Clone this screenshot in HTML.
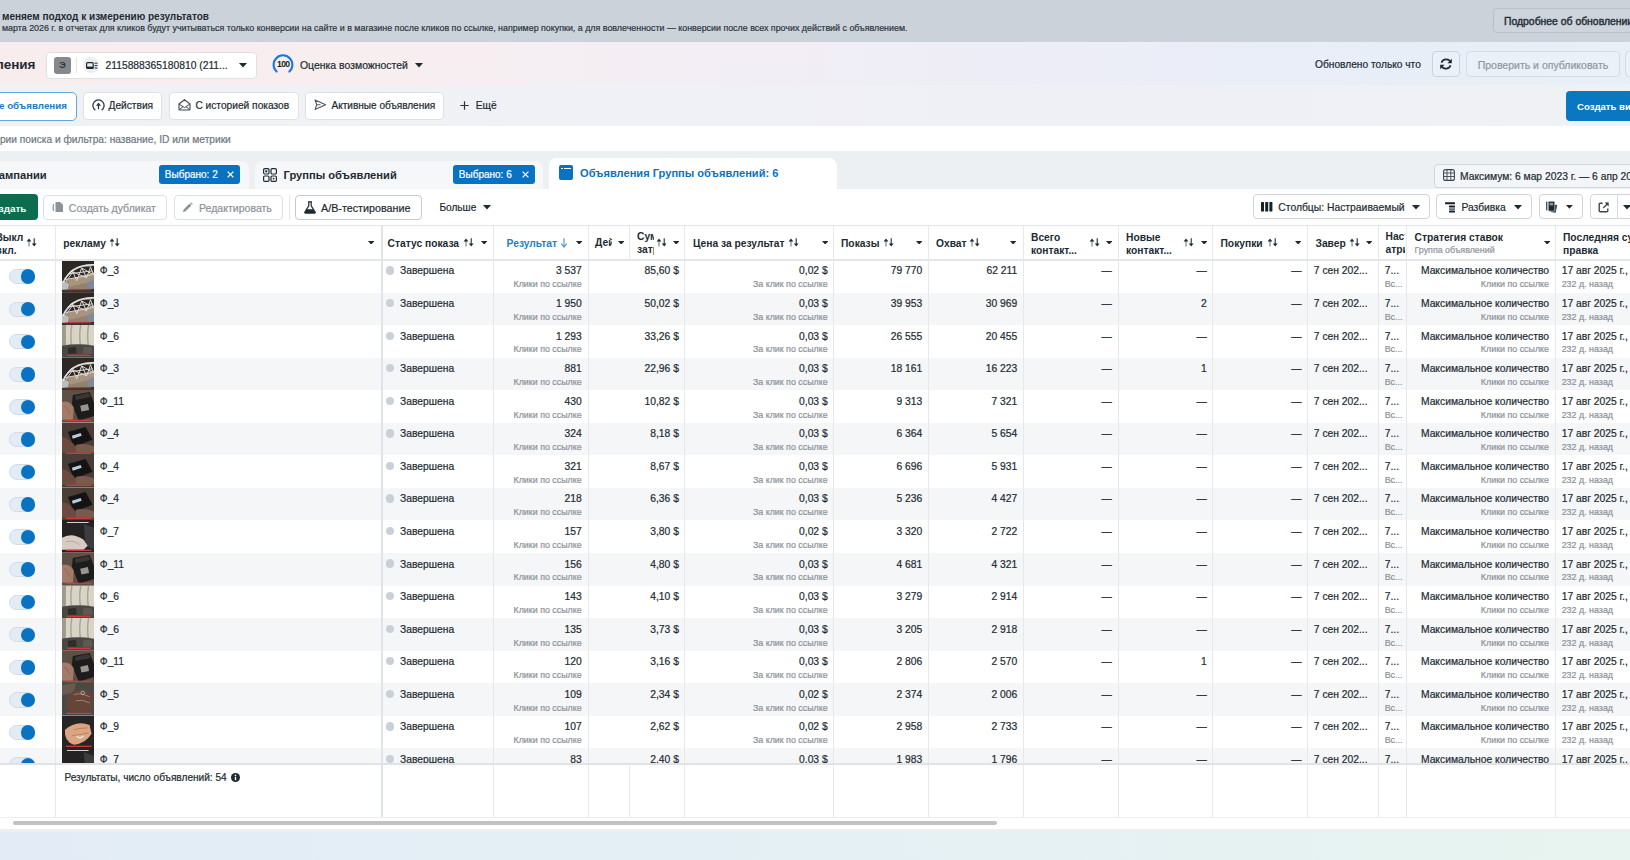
<!DOCTYPE html>
<html><head><meta charset="utf-8"><title>Ads Manager</title>
<style>
html,body{margin:0;padding:0;width:1630px;height:860px;overflow:hidden;background:#fff}
body{position:relative;font-family:"Liberation Sans",sans-serif}
.b{position:absolute;display:block}
.t{position:absolute;white-space:nowrap;font-family:"Liberation Sans",sans-serif;-webkit-text-stroke:0.2px currentColor}
.t[style*="font-weight:700"]{-webkit-text-stroke:0}
</style></head><body>
<div class="b" style="left:0.00px;top:0.00px;width:1630.00px;height:42.00px;background:#ccd2da"></div><div class="b" style="left:0.00px;top:42.00px;width:1630.00px;height:43.00px;background:linear-gradient(90deg,#f8eded 0%,#f7eef0 25%,#f2eef5 45%,#ecedf7 65%,#e8eef8 85%,#e9eff7 100%)"></div><div class="b" style="left:0.00px;top:85.00px;width:1630.00px;height:41.00px;background:linear-gradient(90deg,#eff2f5 0%,#f0f1f6 40%,#efeff6 65%,#eff2f5 100%)"></div><div class="b" style="left:0.00px;top:126.00px;width:1630.00px;height:25.00px;background:#ffffff"></div><div class="b" style="left:0.00px;top:151.00px;width:1630.00px;height:38.00px;background:#eef1f4"></div><div class="b" style="left:0.00px;top:189.00px;width:1630.00px;height:629.00px;background:#ffffff"></div><div class="b" style="left:0.00px;top:818.00px;width:1630.00px;height:11.00px;background:#ffffff"></div><div class="b" style="left:0.00px;top:829.00px;width:1630.00px;height:3.00px;background:#edf0f2"></div><div class="b" style="left:0.00px;top:832.00px;width:1630.00px;height:28.00px;background:linear-gradient(90deg,#e3ecf6 0%,#e4eff5 40%,#e6f2f2 75%,#e8f4ef 100%)"></div><div class="t" style="left:2.00px;top:11.84px;font-size:10px;line-height:10px;font-weight:700;color:#1f2a33;">меняем подход к измерению результатов</div><div class="t" style="left:2.00px;top:24.38px;font-size:8.88px;line-height:8.88px;font-weight:400;color:#2b3640;">марта 2026 г. в отчетах для кликов будут учитываться только конверсии на сайте и в магазине после кликов по ссылке, например покупки, а для вовлеченности — конверсии после всех прочих действий с объявлением.</div><div class="b" style="left:1492.50px;top:8.30px;width:187.50px;height:25.20px;background:#ced4db;border:1px solid #b9c0c8;border-radius:4px;box-sizing:border-box"></div><div class="t" style="left:1504.00px;top:16.90px;font-size:10.4px;line-height:10.4px;font-weight:400;color:#1c2b33;-webkit-text-stroke:0.45px #2a3640">Подробнее об обновлении</div><div class="t" style="left:-164.50px;width:200px;text-align:right;top:58.07px;font-size:13.5px;line-height:13.5px;font-weight:700;color:#1c2b33;">Объявления</div><div class="b" style="left:45.50px;top:51.50px;width:211.50px;height:27.00px;background:#fff;border:1px solid #dde1e6;border-radius:4px;box-sizing:border-box"></div><div class="b" style="left:54.00px;top:57.00px;width:17.00px;height:16.70px;background:#85898e;border-radius:3px"></div><div class="t" style="left:54.00px;width:17px;text-align:center;top:61.11px;font-size:9.2px;line-height:9.2px;font-weight:700;color:#30363b;">Э</div><div class="b" style="left:76.00px;top:57.00px;width:1.00px;height:16.00px;background:#e3e6ea"></div><div class="b" style="left:83.00px;top:57.00px;width:16.00px;height:16.00px;background:#eceff2;border-radius:50%"></div><svg class="b" style="left:85.50px;top:61.50px" width="12" height="8" viewBox="0 0 12 8"><rect x="0.6" y="0.6" width="6.6" height="5.8" rx="1" fill="none" stroke="#1c2b33" stroke-width="1.2"/><rect x="0.6" y="4.6" width="6.6" height="1.8" fill="#1c2b33"/><path d="M8.6 1.2 H11.4 M8.6 3.6 H11.4 M8.6 6 H11.4" stroke="#1c2b33" stroke-width="1"/></svg><div class="t" style="left:105.50px;top:60.98px;font-size:10.3px;line-height:10.3px;font-weight:400;color:#1c2b33;">2115888365180810 (211...</div><svg class="b" style="left:238.50px;top:63.25px" width="8.0" height="4.5" viewBox="0 0 8.0 4.5"><path d="M0 0 L8.0 0 L4.0 4.5 Z" fill="#1c2b33"/></svg><svg class="b" style="left:272.00px;top:54.00px" width="22" height="20" viewBox="0 0 22 20"><path d="M4.6 17.6 A9.4 9.4 0 1 1 17.4 17.6" fill="none" stroke="#1877e6" stroke-width="2.1" stroke-linecap="round"/></svg><div class="t" style="left:272.20px;width:22px;text-align:center;top:60.02px;font-size:8.6px;line-height:8.6px;font-weight:700;color:#1a1d20;letter-spacing:-0.7px">100</div><div class="t" style="left:300.00px;top:60.85px;font-size:10.45px;line-height:10.45px;font-weight:400;color:#1c2b33;">Оценка возможностей</div><svg class="b" style="left:415.00px;top:63.25px" width="8.0" height="4.5" viewBox="0 0 8.0 4.5"><path d="M0 0 L8.0 0 L4.0 4.5 Z" fill="#1c2b33"/></svg><div class="t" style="left:1315.00px;top:60.07px;font-size:10.2px;line-height:10.2px;font-weight:400;color:#1c2b33;">Обновлено только что</div><div class="b" style="left:1432.00px;top:51.00px;width:28.00px;height:25.50px;background:rgba(255,255,255,0.15);border:1px solid #cdd3da;border-radius:4px;box-sizing:border-box"></div><svg class="b" style="left:1439.00px;top:57.00px" width="14" height="14" viewBox="0 0 14 14"><path d="M11.6 5.2 A5 5 0 0 0 2.4 5.6 M2.4 8.8 A5 5 0 0 0 11.6 8.4" fill="none" stroke="#1c2b33" stroke-width="1.6"/><path d="M12.8 1.8 V6.2 H8.4 Z" fill="#1c2b33"/><path d="M1.2 12.2 V7.8 H5.6 Z" fill="#1c2b33"/></svg><div class="b" style="left:1466.00px;top:51.00px;width:153.50px;height:25.50px;background:rgba(255,255,255,0.12);border:1px solid #d5dbe2;border-radius:4px;box-sizing:border-box"></div><div class="t" style="left:1477.70px;top:59.61px;font-size:10.5px;line-height:10.5px;font-weight:400;color:#8f989f;">Проверить и опубликовать</div><div class="b" style="left:1625.00px;top:51.00px;width:35.00px;height:25.50px;background:rgba(255,255,255,0.12);border:1px solid #d5dbe2;border-radius:4px;box-sizing:border-box"></div><div class="b" style="left:-10.00px;top:91.50px;width:86.80px;height:29.50px;background:#fff;border:1.6px solid #62a6dc;border-radius:5px;box-sizing:border-box"></div><div class="t" style="left:-83.00px;width:150px;text-align:right;top:101.40px;font-size:9.8px;line-height:9.8px;font-weight:700;color:#1a7cc8;">Все объявления</div><div class="b" style="left:83.00px;top:91.60px;width:79.00px;height:28.80px;background:#fff;border:1px solid #dde1e6;border-radius:4px;box-sizing:border-box"></div><svg class="b" style="left:91.50px;top:98.60px" width="13" height="13" viewBox="0 0 13 13"><path d="M3.4 11.2 A5.6 5.6 0 1 1 9.6 11.2" fill="none" stroke="#2b3740" stroke-width="1.3"/><path d="M6.5 10.2 V6" fill="none" stroke="#2b3740" stroke-width="1.3"/><path d="M4 6.8 L6.5 3.6 L9 6.8 Z" fill="#2b3740"/></svg><div class="t" style="left:108.50px;top:100.57px;font-size:10.2px;line-height:10.2px;font-weight:400;color:#1c2b33;">Действия</div><div class="b" style="left:169.00px;top:91.60px;width:129.70px;height:28.80px;background:#fff;border:1px solid #dde1e6;border-radius:4px;box-sizing:border-box"></div><svg class="b" style="left:177.50px;top:98.80px" width="13" height="12" viewBox="0 0 13 12"><path d="M1 5 L6.5 0.8 L12 5 V10.2 Q12 11 11.2 11 H1.8 Q1 11 1 10.2 Z" fill="none" stroke="#3b4650" stroke-width="1.1"/><path d="M1 5 L6.5 8.6 L12 5 M1.2 10.8 L5 7.6 M11.8 10.8 L8 7.6" fill="none" stroke="#3b4650" stroke-width="1"/></svg><div class="t" style="left:195.40px;top:100.57px;font-size:10.2px;line-height:10.2px;font-weight:400;color:#1c2b33;">С историей показов</div><div class="b" style="left:305.00px;top:91.60px;width:139.40px;height:28.80px;background:#fff;border:1px solid #dde1e6;border-radius:4px;box-sizing:border-box"></div><svg class="b" style="left:313.50px;top:99.00px" width="13" height="12" viewBox="0 0 13 12"><path d="M1 1 L11.6 5.8 L1 10.6 L2.8 5.8 Z M2.8 5.8 H6.5" fill="none" stroke="#4a555f" stroke-width="1.05" stroke-linejoin="round"/></svg><div class="t" style="left:331.50px;top:100.69px;font-size:10.05px;line-height:10.05px;font-weight:400;color:#1c2b33;">Активные объявления</div><svg class="b" style="left:460.00px;top:100.80px" width="9" height="9" viewBox="0 0 9 9"><path d="M4.5 0.3 V8.7 M0.3 4.5 H8.7" stroke="#2b3740" stroke-width="1.2"/></svg><div class="t" style="left:475.80px;top:101.07px;font-size:10.2px;line-height:10.2px;font-weight:400;color:#1c2b33;">Ещё</div><div class="b" style="left:1565.60px;top:90.80px;width:114.40px;height:29.80px;background:#0a77c1;border-radius:4px"></div><div class="t" style="left:1577.00px;top:102.47px;font-size:9.6px;line-height:9.6px;font-weight:700;color:#ffffff;">Создать вид</div><div class="t" style="left:-169.20px;width:400px;text-align:right;top:135.37px;font-size:10.2px;line-height:10.2px;font-weight:400;color:#6d7780;">Критерии поиска и фильтра: название, ID или метрики</div><div class="b" style="left:0.00px;top:151.50px;width:1630.00px;height:37.50px;background:#edf0f3"></div><div class="b" style="left:-10.00px;top:160.50px;width:258.50px;height:28.50px;background:#f6f7f9;border-radius:0 8px 0 0"></div><div class="b" style="left:254.50px;top:160.50px;width:288.10px;height:28.50px;background:#f6f7f9;border-radius:8px 8px 0 0"></div><div class="b" style="left:549.00px;top:157.70px;width:288.00px;height:31.30px;background:#ffffff;border-radius:8px 8px 0 0"></div><div class="t" style="left:-153.40px;width:200px;text-align:right;top:169.96px;font-size:11.15px;line-height:11.15px;font-weight:700;color:#1c2b33;">Кампании</div><div class="b" style="left:159.00px;top:164.50px;width:81.00px;height:19.70px;background:#0a72c2;border-radius:3px"></div><div class="t" style="left:164.80px;top:170.23px;font-size:10px;line-height:10px;font-weight:400;color:#ffffff;">Выбрано: 2</div><svg class="b" style="left:227.00px;top:171.30px" width="7" height="7" viewBox="0 0 7 7"><path d="M0.6 0.6 L6.4 6.4 M6.4 0.6 L0.6 6.4" stroke="#fff" stroke-width="1.3"/></svg><svg class="b" style="left:263.00px;top:168.00px" width="14" height="14" viewBox="0 0 14 14"><rect x="0.6" y="0.6" width="5.4" height="5.4" rx="1.2" fill="none" stroke="#1c2b33" stroke-width="1.2"/><rect x="8" y="0.6" width="5.4" height="5.4" rx="1.2" fill="none" stroke="#1c2b33" stroke-width="1.2"/><rect x="0.6" y="8" width="5.4" height="5.4" rx="1.2" fill="none" stroke="#1c2b33" stroke-width="1.2"/><rect x="8" y="8" width="5.4" height="5.4" rx="1.2" fill="none" stroke="#1c2b33" stroke-width="1.2"/><rect x="2.3" y="2.3" width="2" height="2" fill="#1c2b33"/><path d="M9.8 9.6 L12 10.7 L9.8 11.8 Z" fill="#1c2b33"/></svg><div class="t" style="left:283.50px;top:169.96px;font-size:11.15px;line-height:11.15px;font-weight:700;color:#1c2b33;">Группы объявлений</div><div class="b" style="left:453.00px;top:164.50px;width:81.50px;height:19.70px;background:#0a72c2;border-radius:3px"></div><div class="t" style="left:458.80px;top:170.23px;font-size:10px;line-height:10px;font-weight:400;color:#ffffff;">Выбрано: 6</div><svg class="b" style="left:521.50px;top:171.30px" width="7" height="7" viewBox="0 0 7 7"><path d="M0.6 0.6 L6.4 6.4 M6.4 0.6 L0.6 6.4" stroke="#fff" stroke-width="1.3"/></svg><div class="b" style="left:558.60px;top:165.00px;width:14.80px;height:15.00px;background:#0a72c2;border-radius:2px"></div><div class="b" style="left:561.00px;top:168.00px;width:1.50px;height:1.20px;background:#fff"></div><div class="b" style="left:564.00px;top:168.00px;width:7.00px;height:1.20px;background:#fff"></div><div class="t" style="left:580.00px;top:168.30px;font-size:11.1px;line-height:11.1px;font-weight:700;color:#0a72c2;">Объявления Группы объявлений: 6</div><div class="b" style="left:1434.40px;top:163.50px;width:245.60px;height:24.50px;background:#f3f5f8;border:1px solid #d2d7dd;border-radius:4px;box-sizing:border-box"></div><svg class="b" style="left:1442.50px;top:169.00px" width="12" height="12" viewBox="0 0 12 12"><rect x="0.6" y="0.6" width="10.8" height="10.8" rx="2" fill="none" stroke="#3b4650" stroke-width="1.1"/><path d="M0.6 4 H11.4 M0.6 7.5 H11.4 M4 0.6 V11.4 M7.8 0.6 V11.4" stroke="#3b4650" stroke-width="0.9"/></svg><div class="t" style="left:1460.00px;top:172.18px;font-size:10.3px;line-height:10.3px;font-weight:400;color:#1c2b33;">Максимум: 6 мар 2023 г. — 6 апр 2026 г.</div><div class="b" style="left:-10.00px;top:194.00px;width:47.50px;height:25.80px;background:#0b6d4e;border-radius:4px"></div><div class="t" style="left:-73.70px;width:100px;text-align:right;top:203.92px;font-size:9.9px;line-height:9.9px;font-weight:700;color:#ffffff;">Создать</div><div class="b" style="left:43.00px;top:194.50px;width:124.00px;height:25.00px;background:#fff;border:1px solid #dde1e6;border-radius:4px;box-sizing:border-box"></div><div class="t" style="left:68.80px;top:203.01px;font-size:10.5px;line-height:10.5px;font-weight:400;color:#8b939b;">Создать дубликат</div><svg class="b" style="left:51.50px;top:201.00px" width="12" height="12" viewBox="0 0 12 12"><path d="M1.5 3 Q0.8 6.5 1.5 10" fill="none" stroke="#8b939b" stroke-width="1.2"/><path d="M3.5 1 H8.2 L11 3.8 V11 H3.5 Z" fill="#8b939b"/></svg><div class="b" style="left:173.50px;top:194.50px;width:109.00px;height:25.00px;background:#fff;border:1px solid #dde1e6;border-radius:4px;box-sizing:border-box"></div><div class="t" style="left:199.00px;top:202.97px;font-size:10.55px;line-height:10.55px;font-weight:400;color:#8b939b;">Редактировать</div><svg class="b" style="left:182.00px;top:201.50px" width="11" height="11" viewBox="0 0 11 11"><path d="M1 10 L1.6 7.6 L7.6 1.6 L9.4 3.4 L3.4 9.4 Z" fill="#8b939b"/><path d="M8.2 1 L9 0.2 L10.8 2 L10 2.8 Z" fill="#8b939b"/></svg><div class="b" style="left:288.70px;top:194.50px;width:1.10px;height:25.50px;background:#e3e6ea"></div><div class="b" style="left:295.00px;top:194.50px;width:127.00px;height:25.00px;background:#fff;border:1px solid #c4cad1;border-radius:4px;box-sizing:border-box"></div><div class="t" style="left:321.00px;top:202.80px;font-size:10.75px;line-height:10.75px;font-weight:400;color:#1c2b33;">A/B-тестирование</div><svg class="b" style="left:303.50px;top:200.50px" width="12" height="13" viewBox="0 0 12 13"><path d="M4 0.8 H8 M4.8 0.8 V4.8 L0.8 11.2 Q0.5 12.2 1.6 12.2 H10.4 Q11.5 12.2 11.2 11.2 L7.2 4.8 V0.8" fill="none" stroke="#1c2b33" stroke-width="1.2"/><path d="M2.6 8.2 H9.4 L11 11.4 Q11.2 12 10.4 12 H1.6 Q0.8 12 1 11.4 Z" fill="#1c2b33"/></svg><div class="t" style="left:439.40px;top:203.35px;font-size:10.1px;line-height:10.1px;font-weight:400;color:#1c2b33;">Больше</div><svg class="b" style="left:483.00px;top:205.25px" width="8.0" height="4.5" viewBox="0 0 8.0 4.5"><path d="M0 0 L8.0 0 L4.0 4.5 Z" fill="#1c2b33"/></svg><div class="b" style="left:1252.60px;top:194.00px;width:177.40px;height:25.40px;background:#fff;border:1px solid #d0d5db;border-radius:4px;box-sizing:border-box"></div><svg class="b" style="left:1260.90px;top:202.00px" width="12" height="10" viewBox="0 0 12 10"><rect x="0" y="0" width="3" height="9.6" rx="0.6" fill="#13212b"/><rect x="4.2" y="0" width="3" height="9.6" rx="0.6" fill="#13212b"/><rect x="8.4" y="0" width="3" height="9.6" rx="0.6" fill="#13212b"/></svg><div class="t" style="left:1278.30px;top:202.74px;font-size:10.35px;line-height:10.35px;font-weight:400;color:#1c2b33;">Столбцы: Настраиваемый</div><svg class="b" style="left:1412.00px;top:205.25px" width="8.0" height="4.5" viewBox="0 0 8.0 4.5"><path d="M0 0 L8.0 0 L4.0 4.5 Z" fill="#1c2b33"/></svg><div class="b" style="left:1436.00px;top:194.00px;width:96.00px;height:25.40px;background:#fff;border:1px solid #d0d5db;border-radius:4px;box-sizing:border-box"></div><svg class="b" style="left:1444.80px;top:201.50px" width="11" height="11.5" viewBox="0 0 11 11.5"><rect x="0" y="0.3" width="10" height="2" rx="0.6" fill="#13212b"/><rect x="4" y="3.6" width="6" height="2" rx="0.5" fill="#13212b"/><rect x="4" y="6.3" width="6" height="1.6" fill="#55616b"/><rect x="4" y="8.6" width="6" height="2" rx="0.6" fill="#13212b"/></svg><div class="t" style="left:1461.40px;top:202.78px;font-size:10.3px;line-height:10.3px;font-weight:400;color:#1c2b33;">Разбивка</div><svg class="b" style="left:1514.00px;top:205.25px" width="8.0" height="4.5" viewBox="0 0 8.0 4.5"><path d="M0 0 L8.0 0 L4.0 4.5 Z" fill="#1c2b33"/></svg><div class="b" style="left:1538.50px;top:194.00px;width:44.50px;height:25.40px;background:#fff;border:1px solid #d0d5db;border-radius:4px;box-sizing:border-box"></div><svg class="b" style="left:1546.30px;top:200.80px" width="12" height="12" viewBox="0 0 12 12"><path d="M6.5 3.2 L11.2 4 L9.6 11.8 L4.5 11 Z" fill="#2a3740"/><rect x="0.2" y="0.6" width="1.2" height="8.8" rx="0.5" fill="#1c2b33"/><rect x="2.2" y="0.2" width="6.6" height="10" rx="1" fill="#1c2b33" stroke="#fff" stroke-width="0.6"/><rect x="3.6" y="1.8" width="3.6" height="2.6" fill="#8d969d"/></svg><svg class="b" style="left:1565.90px;top:205.29px" width="6.8" height="3.8249999999999997" viewBox="0 0 6.8 3.8249999999999997"><path d="M0 0 L6.8 0 L3.4 3.8249999999999997 Z" fill="#1c2b33"/></svg><div class="b" style="left:1589.50px;top:194.00px;width:90.50px;height:25.40px;background:#fff;border:1px solid #d0d5db;border-radius:4px;box-sizing:border-box"></div><div class="b" style="left:1616.50px;top:194.50px;width:1.00px;height:24.50px;background:#d7dce1"></div><svg class="b" style="left:1597.50px;top:201.50px" width="12" height="11" viewBox="0 0 12 11"><path d="M4.6 1.2 H2.2 Q1.2 1.2 1.2 2.2 V8.8 Q1.2 9.8 2.2 9.8 H8.8 Q9.8 9.8 9.8 8.8 V6.6" fill="none" stroke="#3b4650" stroke-width="1.4"/><path d="M6.8 0.6 H10.6 V4.4 Z" fill="#1c2b33"/><path d="M10 1.2 L5.2 6" stroke="#3b4650" stroke-width="1.3"/></svg><svg class="b" style="left:1623.00px;top:205.25px" width="8.0" height="4.5" viewBox="0 0 8.0 4.5"><path d="M0 0 L8.0 0 L4.0 4.5 Z" fill="#1c2b33"/></svg><div class="b" style="left:0.00px;top:225.00px;width:1630.00px;height:1.10px;background:#e3e6e9"></div><div class="b" style="left:0;top:260.0px;width:1630px;height:502.80px;overflow:hidden"><div class="b" style="left:0;top:0.00px;width:1630px;height:32.76px;background:#ffffff"></div><div class="b" style="left:0;top:32.56px;width:1630px;height:32.76px;background:#f5f6f8"></div><div class="b" style="left:0;top:65.12px;width:1630px;height:32.76px;background:#ffffff"></div><div class="b" style="left:0;top:97.68px;width:1630px;height:32.76px;background:#f5f6f8"></div><div class="b" style="left:0;top:130.24px;width:1630px;height:32.76px;background:#ffffff"></div><div class="b" style="left:0;top:162.80px;width:1630px;height:32.76px;background:#f5f6f8"></div><div class="b" style="left:0;top:195.36px;width:1630px;height:32.76px;background:#ffffff"></div><div class="b" style="left:0;top:227.92px;width:1630px;height:32.76px;background:#f5f6f8"></div><div class="b" style="left:0;top:260.48px;width:1630px;height:32.76px;background:#ffffff"></div><div class="b" style="left:0;top:293.04px;width:1630px;height:32.76px;background:#f5f6f8"></div><div class="b" style="left:0;top:325.60px;width:1630px;height:32.76px;background:#ffffff"></div><div class="b" style="left:0;top:358.16px;width:1630px;height:32.76px;background:#f5f6f8"></div><div class="b" style="left:0;top:390.72px;width:1630px;height:32.76px;background:#ffffff"></div><div class="b" style="left:0;top:423.28px;width:1630px;height:32.76px;background:#f5f6f8"></div><div class="b" style="left:0;top:455.84px;width:1630px;height:32.76px;background:#ffffff"></div><div class="b" style="left:0;top:488.40px;width:1630px;height:32.76px;background:#f5f6f8"></div></div><div class="b" style="left:0.00px;top:259.20px;width:1630.00px;height:1.80px;background:#e3e6e9"></div><div class="b" style="left:54.80px;top:225.50px;width:1.10px;height:592.00px;background:#e6e8eb"></div><div class="b" style="left:380.50px;top:225.50px;width:2.00px;height:592.00px;background:#e0e3e7"></div><div class="b" style="left:492.50px;top:225.50px;width:1.10px;height:592.00px;background:#e6e8eb"></div><div class="b" style="left:587.50px;top:225.50px;width:1.10px;height:592.00px;background:#e6e8eb"></div><div class="b" style="left:629.20px;top:225.50px;width:1.10px;height:35.50px;background:#e6e8eb"></div><div class="b" style="left:629.20px;top:762.80px;width:1.10px;height:54.70px;background:#e6e8eb"></div><div class="b" style="left:684.00px;top:225.50px;width:1.10px;height:592.00px;background:#e6e8eb"></div><div class="b" style="left:833.00px;top:225.50px;width:1.10px;height:592.00px;background:#e6e8eb"></div><div class="b" style="left:928.10px;top:225.50px;width:1.10px;height:592.00px;background:#e6e8eb"></div><div class="b" style="left:1022.90px;top:225.50px;width:1.10px;height:592.00px;background:#e6e8eb"></div><div class="b" style="left:1117.80px;top:225.50px;width:1.10px;height:592.00px;background:#e6e8eb"></div><div class="b" style="left:1212.30px;top:225.50px;width:1.10px;height:592.00px;background:#e6e8eb"></div><div class="b" style="left:1307.00px;top:225.50px;width:1.10px;height:592.00px;background:#e6e8eb"></div><div class="b" style="left:1378.00px;top:225.50px;width:1.10px;height:592.00px;background:#e6e8eb"></div><div class="b" style="left:1406.20px;top:225.50px;width:1.10px;height:592.00px;background:#e6e8eb"></div><div class="b" style="left:1555.10px;top:225.50px;width:1.10px;height:592.00px;background:#e6e8eb"></div><div class="b" style="left:0.00px;top:817.00px;width:1630.00px;height:1.00px;background:#eceef0"></div><div class="t" style="left:-36.70px;width:60px;text-align:right;top:232.62px;font-size:10.25px;line-height:10.25px;font-weight:700;color:#1c2b33;">Выкл</div><div class="t" style="left:-43.50px;width:60px;text-align:right;top:245.92px;font-size:10.25px;line-height:10.25px;font-weight:700;color:#1c2b33;">вкл.</div><svg class="b" style="left:26.00px;top:238.00px" width="11" height="9" viewBox="0 0 11 9"><path d="M3 8.5 V2.5" stroke="#6f7a84" stroke-width="1.1"/><path d="M0.6 3.6 L3 0.4 L5.4 3.6 Z" fill="#1c2b33"/><path d="M8.2 0.3 V6.5" stroke="#1c2b33" stroke-width="1.1"/><path d="M5.8 5.4 L8.2 8.6 L10.6 5.4 Z" fill="#1c2b33"/></svg><div class="t" style="left:63.30px;top:238.62px;font-size:10.25px;line-height:10.25px;font-weight:700;color:#1c2b33;">рекламу</div><svg class="b" style="left:109.30px;top:238.00px" width="11" height="9" viewBox="0 0 11 9"><path d="M3 8.5 V2.5" stroke="#6f7a84" stroke-width="1.1"/><path d="M0.6 3.6 L3 0.4 L5.4 3.6 Z" fill="#1c2b33"/><path d="M8.2 0.3 V6.5" stroke="#1c2b33" stroke-width="1.1"/><path d="M5.8 5.4 L8.2 8.6 L10.6 5.4 Z" fill="#1c2b33"/></svg><svg class="b" style="left:367.80px;top:240.70px" width="6.4" height="3.6" viewBox="0 0 6.4 3.6"><path d="M0 0 L6.4 0 L3.2 3.6 Z" fill="#1c2b33"/></svg><div class="t" style="left:387.60px;top:238.62px;font-size:10.25px;line-height:10.25px;font-weight:700;color:#1c2b33;">Статус показа</div><svg class="b" style="left:462.50px;top:238.00px" width="11" height="9" viewBox="0 0 11 9"><path d="M3 8.5 V2.5" stroke="#6f7a84" stroke-width="1.1"/><path d="M0.6 3.6 L3 0.4 L5.4 3.6 Z" fill="#1c2b33"/><path d="M8.2 0.3 V6.5" stroke="#1c2b33" stroke-width="1.1"/><path d="M5.8 5.4 L8.2 8.6 L10.6 5.4 Z" fill="#1c2b33"/></svg><svg class="b" style="left:481.20px;top:240.70px" width="6.4" height="3.6" viewBox="0 0 6.4 3.6"><path d="M0 0 L6.4 0 L3.2 3.6 Z" fill="#1c2b33"/></svg><div class="t" style="left:506.60px;top:238.62px;font-size:10.25px;line-height:10.25px;font-weight:700;color:#1a7fcf;">Результат</div><svg class="b" style="left:559.50px;top:238.00px" width="8" height="10" viewBox="0 0 8 10"><path d="M4 0.3 V8.6" stroke="#4f8fc8" stroke-width="1.1" fill="none"/><path d="M1.4 5.6 L4 9 L6.6 5.6" stroke="#4f8fc8" stroke-width="1.1" fill="none"/></svg><svg class="b" style="left:575.80px;top:240.70px" width="6.4" height="3.6" viewBox="0 0 6.4 3.6"><path d="M0 0 L6.4 0 L3.2 3.6 Z" fill="#1c2b33"/></svg><div class="b" style="left:590px;top:226px;width:22px;height:33px;overflow:hidden"><div class="t" style="left:5px;top:11.92px;font-size:10.25px;line-height:10.25px;font-weight:700;color:#1c2b33">Действия</div></div><svg class="b" style="left:617.80px;top:240.70px" width="6.4" height="3.6" viewBox="0 0 6.4 3.6"><path d="M0 0 L6.4 0 L3.2 3.6 Z" fill="#1c2b33"/></svg><div class="b" style="left:632px;top:226px;width:21.5px;height:33px;overflow:hidden"><div class="t" style="left:5px;top:5.92px;font-size:10.25px;line-height:10.25px;font-weight:700;color:#1c2b33">Сумма</div><div class="t" style="left:5px;top:19.22px;font-size:10.25px;line-height:10.25px;font-weight:700;color:#1c2b33">затрат</div></div><svg class="b" style="left:655.50px;top:238.00px" width="11" height="9" viewBox="0 0 11 9"><path d="M3 8.5 V2.5" stroke="#6f7a84" stroke-width="1.1"/><path d="M0.6 3.6 L3 0.4 L5.4 3.6 Z" fill="#1c2b33"/><path d="M8.2 0.3 V6.5" stroke="#1c2b33" stroke-width="1.1"/><path d="M5.8 5.4 L8.2 8.6 L10.6 5.4 Z" fill="#1c2b33"/></svg><svg class="b" style="left:672.80px;top:240.70px" width="6.4" height="3.6" viewBox="0 0 6.4 3.6"><path d="M0 0 L6.4 0 L3.2 3.6 Z" fill="#1c2b33"/></svg><div class="t" style="left:693.00px;top:238.62px;font-size:10.25px;line-height:10.25px;font-weight:700;color:#1c2b33;">Цена за результат</div><svg class="b" style="left:787.80px;top:238.00px" width="11" height="9" viewBox="0 0 11 9"><path d="M3 8.5 V2.5" stroke="#6f7a84" stroke-width="1.1"/><path d="M0.6 3.6 L3 0.4 L5.4 3.6 Z" fill="#1c2b33"/><path d="M8.2 0.3 V6.5" stroke="#1c2b33" stroke-width="1.1"/><path d="M5.8 5.4 L8.2 8.6 L10.6 5.4 Z" fill="#1c2b33"/></svg><svg class="b" style="left:821.80px;top:240.70px" width="6.4" height="3.6" viewBox="0 0 6.4 3.6"><path d="M0 0 L6.4 0 L3.2 3.6 Z" fill="#1c2b33"/></svg><div class="t" style="left:841.00px;top:238.62px;font-size:10.25px;line-height:10.25px;font-weight:700;color:#1c2b33;">Показы</div><svg class="b" style="left:883.00px;top:238.00px" width="11" height="9" viewBox="0 0 11 9"><path d="M3 8.5 V2.5" stroke="#6f7a84" stroke-width="1.1"/><path d="M0.6 3.6 L3 0.4 L5.4 3.6 Z" fill="#1c2b33"/><path d="M8.2 0.3 V6.5" stroke="#1c2b33" stroke-width="1.1"/><path d="M5.8 5.4 L8.2 8.6 L10.6 5.4 Z" fill="#1c2b33"/></svg><svg class="b" style="left:915.80px;top:240.70px" width="6.4" height="3.6" viewBox="0 0 6.4 3.6"><path d="M0 0 L6.4 0 L3.2 3.6 Z" fill="#1c2b33"/></svg><div class="t" style="left:936.00px;top:238.62px;font-size:10.25px;line-height:10.25px;font-weight:700;color:#1c2b33;">Охват</div><svg class="b" style="left:969.30px;top:238.00px" width="11" height="9" viewBox="0 0 11 9"><path d="M3 8.5 V2.5" stroke="#6f7a84" stroke-width="1.1"/><path d="M0.6 3.6 L3 0.4 L5.4 3.6 Z" fill="#1c2b33"/><path d="M8.2 0.3 V6.5" stroke="#1c2b33" stroke-width="1.1"/><path d="M5.8 5.4 L8.2 8.6 L10.6 5.4 Z" fill="#1c2b33"/></svg><svg class="b" style="left:1010.30px;top:240.70px" width="6.4" height="3.6" viewBox="0 0 6.4 3.6"><path d="M0 0 L6.4 0 L3.2 3.6 Z" fill="#1c2b33"/></svg><div class="t" style="left:1031.00px;top:232.62px;font-size:10.25px;line-height:10.25px;font-weight:700;color:#1c2b33;">Всего</div><div class="t" style="left:1031.00px;top:245.92px;font-size:10.25px;line-height:10.25px;font-weight:700;color:#1c2b33;">контакт...</div><svg class="b" style="left:1088.50px;top:238.00px" width="11" height="9" viewBox="0 0 11 9"><path d="M3 8.5 V2.5" stroke="#6f7a84" stroke-width="1.1"/><path d="M0.6 3.6 L3 0.4 L5.4 3.6 Z" fill="#1c2b33"/><path d="M8.2 0.3 V6.5" stroke="#1c2b33" stroke-width="1.1"/><path d="M5.8 5.4 L8.2 8.6 L10.6 5.4 Z" fill="#1c2b33"/></svg><svg class="b" style="left:1105.80px;top:240.70px" width="6.4" height="3.6" viewBox="0 0 6.4 3.6"><path d="M0 0 L6.4 0 L3.2 3.6 Z" fill="#1c2b33"/></svg><div class="t" style="left:1126.00px;top:232.62px;font-size:10.25px;line-height:10.25px;font-weight:700;color:#1c2b33;">Новые</div><div class="t" style="left:1126.00px;top:245.92px;font-size:10.25px;line-height:10.25px;font-weight:700;color:#1c2b33;">контакт...</div><svg class="b" style="left:1183.20px;top:238.00px" width="11" height="9" viewBox="0 0 11 9"><path d="M3 8.5 V2.5" stroke="#6f7a84" stroke-width="1.1"/><path d="M0.6 3.6 L3 0.4 L5.4 3.6 Z" fill="#1c2b33"/><path d="M8.2 0.3 V6.5" stroke="#1c2b33" stroke-width="1.1"/><path d="M5.8 5.4 L8.2 8.6 L10.6 5.4 Z" fill="#1c2b33"/></svg><svg class="b" style="left:1200.80px;top:240.70px" width="6.4" height="3.6" viewBox="0 0 6.4 3.6"><path d="M0 0 L6.4 0 L3.2 3.6 Z" fill="#1c2b33"/></svg><div class="t" style="left:1220.50px;top:238.62px;font-size:10.25px;line-height:10.25px;font-weight:700;color:#1c2b33;">Покупки</div><svg class="b" style="left:1267.00px;top:238.00px" width="11" height="9" viewBox="0 0 11 9"><path d="M3 8.5 V2.5" stroke="#6f7a84" stroke-width="1.1"/><path d="M0.6 3.6 L3 0.4 L5.4 3.6 Z" fill="#1c2b33"/><path d="M8.2 0.3 V6.5" stroke="#1c2b33" stroke-width="1.1"/><path d="M5.8 5.4 L8.2 8.6 L10.6 5.4 Z" fill="#1c2b33"/></svg><svg class="b" style="left:1295.30px;top:240.70px" width="6.4" height="3.6" viewBox="0 0 6.4 3.6"><path d="M0 0 L6.4 0 L3.2 3.6 Z" fill="#1c2b33"/></svg><div class="t" style="left:1315.50px;top:238.62px;font-size:10.25px;line-height:10.25px;font-weight:700;color:#1c2b33;">Завер</div><svg class="b" style="left:1349.20px;top:238.00px" width="11" height="9" viewBox="0 0 11 9"><path d="M3 8.5 V2.5" stroke="#6f7a84" stroke-width="1.1"/><path d="M0.6 3.6 L3 0.4 L5.4 3.6 Z" fill="#1c2b33"/><path d="M8.2 0.3 V6.5" stroke="#1c2b33" stroke-width="1.1"/><path d="M5.8 5.4 L8.2 8.6 L10.6 5.4 Z" fill="#1c2b33"/></svg><svg class="b" style="left:1366.30px;top:240.70px" width="6.4" height="3.6" viewBox="0 0 6.4 3.6"><path d="M0 0 L6.4 0 L3.2 3.6 Z" fill="#1c2b33"/></svg><div class="b" style="left:1380px;top:226px;width:24.5px;height:33px;overflow:hidden"><div class="t" style="left:5.5px;top:5.92px;font-size:10.25px;line-height:10.25px;font-weight:700;color:#1c2b33">Настройка</div><div class="t" style="left:5.5px;top:19.22px;font-size:10.25px;line-height:10.25px;font-weight:700;color:#1c2b33">атрибуции</div></div><div class="t" style="left:1414.50px;top:232.62px;font-size:10.25px;line-height:10.25px;font-weight:700;color:#1c2b33;">Стратегия ставок</div><div class="t" style="left:1414.50px;top:245.77px;font-size:8.9px;line-height:8.9px;font-weight:400;color:#8d949b;">Группа объявлений</div><svg class="b" style="left:1543.80px;top:240.70px" width="6.4" height="3.6" viewBox="0 0 6.4 3.6"><path d="M0 0 L6.4 0 L3.2 3.6 Z" fill="#1c2b33"/></svg><div class="t" style="left:1563.00px;top:232.62px;font-size:10.25px;line-height:10.25px;font-weight:700;color:#1c2b33;">Последняя существенная</div><div class="t" style="left:1563.00px;top:245.92px;font-size:10.25px;line-height:10.25px;font-weight:700;color:#1c2b33;">правка</div><div class="b" style="left:0;top:260.80px;width:1630px;height:504.60px;overflow:hidden"><div class="b" style="left:8.7px;top:8.20px;width:26.6px;height:15.3px;border-radius:8px;background:#e1ecf7;border:1px solid #d3dbe3;box-sizing:border-box"></div><div class="b" style="left:20.70px;top:8.65px;width:14.4px;height:14.4px;border-radius:50%;background:#0a72c2"></div><div class="b" style="left:61.5px;top:-0.80px;width:32.5px;height:32.66px;overflow:hidden"><svg style="display:block;width:100%;height:100%;filter:blur(0.45px)" viewBox="0 0 33 33" preserveAspectRatio="none"><rect width="33" height="33" fill="#2e2824"/><path d="M0 22 L33 12 L33 29 L0 30 Z" fill="#94806f"/><path d="M6 20 L33 13 L33 21 L8 27 Z" fill="#a8937f"/><path d="M0 21 L7 24 L6 30 L0 30 Z" fill="#bdbdc0"/><path d="M25 23 L33 19 L33 29 L27 29 Z" fill="#7f8aa0"/><path d="M1 23 Q10 4 33 5" stroke="#e4e2de" stroke-width="1.7" fill="none"/><path d="M3 19 L9 11 L15 8 L22 6 L30 6 M4 22 L11 12 L15 21 L20 8 L25 18 L29 7 L32 15 M2 20 L30 15 M7 14 L31 11 M11 12 L25 18 M20 8 L32 15" stroke="#dcd9d4" stroke-width="1" fill="none"/><rect x="3" y="29.6" width="27" height="1.2" fill="#d23a3e"/><rect x="0" y="30.8" width="33" height="2.2" fill="#3a3532"/></svg></div><div class="t" style="left:99.80px;top:5.68px;font-size:10.3px;line-height:10.3px;font-weight:400;color:#1c2b33">Ф_3</div><div class="b" style="left:386px;top:5.65px;width:8.3px;height:8.3px;border-radius:50%;background:#c9d0d7"></div><div class="t" style="left:400.00px;top:5.68px;font-size:10.3px;line-height:10.3px;font-weight:400;color:#1c2b33">Завершена</div><div class="t" style="left:281.70px;width:300px;text-align:right;top:5.68px;font-size:10.3px;line-height:10.3px;font-weight:400;color:#1c2b33">3 537</div><div class="t" style="left:281.70px;width:300px;text-align:right;top:19.57px;font-size:8.9px;line-height:8.9px;font-weight:400;color:#8a9198">Клики по ссылке</div><div class="t" style="left:378.90px;width:300px;text-align:right;top:5.68px;font-size:10.3px;line-height:10.3px;font-weight:400;color:#1c2b33">85,60 $</div><div class="t" style="left:527.70px;width:300px;text-align:right;top:5.68px;font-size:10.3px;line-height:10.3px;font-weight:400;color:#1c2b33">0,02 $</div><div class="t" style="left:527.70px;width:300px;text-align:right;top:19.57px;font-size:8.9px;line-height:8.9px;font-weight:400;color:#8a9198">За клик по ссылке</div><div class="t" style="left:622.20px;width:300px;text-align:right;top:5.68px;font-size:10.3px;line-height:10.3px;font-weight:400;color:#1c2b33">79 770</div><div class="t" style="left:717.20px;width:300px;text-align:right;top:5.68px;font-size:10.3px;line-height:10.3px;font-weight:400;color:#1c2b33">62 211</div><div class="t" style="left:811.80px;width:300px;text-align:right;top:5.68px;font-size:10.3px;line-height:10.3px;font-weight:400;color:#1c2b33">—</div><div class="t" style="left:906.80px;width:300px;text-align:right;top:5.68px;font-size:10.3px;line-height:10.3px;font-weight:400;color:#1c2b33">—</div><div class="t" style="left:1001.50px;width:300px;text-align:right;top:5.68px;font-size:10.3px;line-height:10.3px;font-weight:400;color:#1c2b33">—</div><div class="t" style="left:1313.80px;top:5.68px;font-size:10.3px;line-height:10.3px;font-weight:400;color:#1c2b33">7 сен 202...</div><div class="t" style="left:1384.70px;top:5.68px;font-size:10.3px;line-height:10.3px;font-weight:400;color:#1c2b33">7...</div><div class="t" style="left:1384.70px;top:19.57px;font-size:8.9px;line-height:8.9px;font-weight:400;color:#8a9198">Вс...</div><div class="t" style="left:1249.00px;width:300px;text-align:right;top:5.68px;font-size:10.3px;line-height:10.3px;font-weight:400;color:#1c2b33">Максимальное количество</div><div class="t" style="left:1249.00px;width:300px;text-align:right;top:19.57px;font-size:8.9px;line-height:8.9px;font-weight:400;color:#8a9198">Клики по ссылке</div><div class="t" style="left:1561.70px;top:5.68px;font-size:10.3px;line-height:10.3px;font-weight:400;color:#1c2b33">17 авг 2025 г., 09:12</div><div class="t" style="left:1561.70px;top:19.57px;font-size:8.9px;line-height:8.9px;font-weight:400;color:#8a9198">232 д. назад</div><div class="b" style="left:8.7px;top:40.76px;width:26.6px;height:15.3px;border-radius:8px;background:#e1ecf7;border:1px solid #d3dbe3;box-sizing:border-box"></div><div class="b" style="left:20.70px;top:41.21px;width:14.4px;height:14.4px;border-radius:50%;background:#0a72c2"></div><div class="b" style="left:61.5px;top:31.76px;width:32.5px;height:32.66px;overflow:hidden"><svg style="display:block;width:100%;height:100%;filter:blur(0.45px)" viewBox="0 0 33 33" preserveAspectRatio="none"><rect width="33" height="33" fill="#2e2824"/><path d="M0 22 L33 12 L33 29 L0 30 Z" fill="#94806f"/><path d="M6 20 L33 13 L33 21 L8 27 Z" fill="#a8937f"/><path d="M0 21 L7 24 L6 30 L0 30 Z" fill="#bdbdc0"/><path d="M25 23 L33 19 L33 29 L27 29 Z" fill="#7f8aa0"/><path d="M1 23 Q10 4 33 5" stroke="#e4e2de" stroke-width="1.7" fill="none"/><path d="M3 19 L9 11 L15 8 L22 6 L30 6 M4 22 L11 12 L15 21 L20 8 L25 18 L29 7 L32 15 M2 20 L30 15 M7 14 L31 11 M11 12 L25 18 M20 8 L32 15" stroke="#dcd9d4" stroke-width="1" fill="none"/><rect x="3" y="29.6" width="27" height="1.2" fill="#d23a3e"/><rect x="0" y="30.8" width="33" height="2.2" fill="#3a3532"/></svg></div><div class="t" style="left:99.80px;top:38.24px;font-size:10.3px;line-height:10.3px;font-weight:400;color:#1c2b33">Ф_3</div><div class="b" style="left:386px;top:38.21px;width:8.3px;height:8.3px;border-radius:50%;background:#c9d0d7"></div><div class="t" style="left:400.00px;top:38.24px;font-size:10.3px;line-height:10.3px;font-weight:400;color:#1c2b33">Завершена</div><div class="t" style="left:281.70px;width:300px;text-align:right;top:38.24px;font-size:10.3px;line-height:10.3px;font-weight:400;color:#1c2b33">1 950</div><div class="t" style="left:281.70px;width:300px;text-align:right;top:52.13px;font-size:8.9px;line-height:8.9px;font-weight:400;color:#8a9198">Клики по ссылке</div><div class="t" style="left:378.90px;width:300px;text-align:right;top:38.24px;font-size:10.3px;line-height:10.3px;font-weight:400;color:#1c2b33">50,02 $</div><div class="t" style="left:527.70px;width:300px;text-align:right;top:38.24px;font-size:10.3px;line-height:10.3px;font-weight:400;color:#1c2b33">0,03 $</div><div class="t" style="left:527.70px;width:300px;text-align:right;top:52.13px;font-size:8.9px;line-height:8.9px;font-weight:400;color:#8a9198">За клик по ссылке</div><div class="t" style="left:622.20px;width:300px;text-align:right;top:38.24px;font-size:10.3px;line-height:10.3px;font-weight:400;color:#1c2b33">39 953</div><div class="t" style="left:717.20px;width:300px;text-align:right;top:38.24px;font-size:10.3px;line-height:10.3px;font-weight:400;color:#1c2b33">30 969</div><div class="t" style="left:811.80px;width:300px;text-align:right;top:38.24px;font-size:10.3px;line-height:10.3px;font-weight:400;color:#1c2b33">—</div><div class="t" style="left:906.80px;width:300px;text-align:right;top:38.24px;font-size:10.3px;line-height:10.3px;font-weight:400;color:#1c2b33">2</div><div class="t" style="left:1001.50px;width:300px;text-align:right;top:38.24px;font-size:10.3px;line-height:10.3px;font-weight:400;color:#1c2b33">—</div><div class="t" style="left:1313.80px;top:38.24px;font-size:10.3px;line-height:10.3px;font-weight:400;color:#1c2b33">7 сен 202...</div><div class="t" style="left:1384.70px;top:38.24px;font-size:10.3px;line-height:10.3px;font-weight:400;color:#1c2b33">7...</div><div class="t" style="left:1384.70px;top:52.13px;font-size:8.9px;line-height:8.9px;font-weight:400;color:#8a9198">Вс...</div><div class="t" style="left:1249.00px;width:300px;text-align:right;top:38.24px;font-size:10.3px;line-height:10.3px;font-weight:400;color:#1c2b33">Максимальное количество</div><div class="t" style="left:1249.00px;width:300px;text-align:right;top:52.13px;font-size:8.9px;line-height:8.9px;font-weight:400;color:#8a9198">Клики по ссылке</div><div class="t" style="left:1561.70px;top:38.24px;font-size:10.3px;line-height:10.3px;font-weight:400;color:#1c2b33">17 авг 2025 г., 09:12</div><div class="t" style="left:1561.70px;top:52.13px;font-size:8.9px;line-height:8.9px;font-weight:400;color:#8a9198">232 д. назад</div><div class="b" style="left:8.7px;top:73.32px;width:26.6px;height:15.3px;border-radius:8px;background:#e1ecf7;border:1px solid #d3dbe3;box-sizing:border-box"></div><div class="b" style="left:20.70px;top:73.77px;width:14.4px;height:14.4px;border-radius:50%;background:#0a72c2"></div><div class="b" style="left:61.5px;top:64.32px;width:32.5px;height:32.66px;overflow:hidden"><svg style="display:block;width:100%;height:100%;filter:blur(0.45px)" viewBox="0 0 33 33" preserveAspectRatio="none"><rect width="33" height="33" fill="#d9d5c6"/><path d="M10 0 Q8 11 10 21 M19 0 Q17 11 19 22 M27 0 Q25 11 27 22" stroke="#aaa596" stroke-width="1.5" fill="none"/><path d="M0 0 L4 0 L4 22 L0 22 Z" fill="#a09a8b"/><path d="M0 21 Q16 18 33 21 V33 H0 Z" fill="#4a4842"/><path d="M6 23 L14 22 L15 29 L6 29 Z" fill="#2e2d2a"/><path d="M22 22 L30 22 L31 29 L21 29 Z" fill="#5c5a52"/><rect x="5" y="30" width="24" height="1.3" fill="#d23a3e"/></svg></div><div class="t" style="left:99.80px;top:70.80px;font-size:10.3px;line-height:10.3px;font-weight:400;color:#1c2b33">Ф_6</div><div class="b" style="left:386px;top:70.77px;width:8.3px;height:8.3px;border-radius:50%;background:#c9d0d7"></div><div class="t" style="left:400.00px;top:70.80px;font-size:10.3px;line-height:10.3px;font-weight:400;color:#1c2b33">Завершена</div><div class="t" style="left:281.70px;width:300px;text-align:right;top:70.80px;font-size:10.3px;line-height:10.3px;font-weight:400;color:#1c2b33">1 293</div><div class="t" style="left:281.70px;width:300px;text-align:right;top:84.69px;font-size:8.9px;line-height:8.9px;font-weight:400;color:#8a9198">Клики по ссылке</div><div class="t" style="left:378.90px;width:300px;text-align:right;top:70.80px;font-size:10.3px;line-height:10.3px;font-weight:400;color:#1c2b33">33,26 $</div><div class="t" style="left:527.70px;width:300px;text-align:right;top:70.80px;font-size:10.3px;line-height:10.3px;font-weight:400;color:#1c2b33">0,03 $</div><div class="t" style="left:527.70px;width:300px;text-align:right;top:84.69px;font-size:8.9px;line-height:8.9px;font-weight:400;color:#8a9198">За клик по ссылке</div><div class="t" style="left:622.20px;width:300px;text-align:right;top:70.80px;font-size:10.3px;line-height:10.3px;font-weight:400;color:#1c2b33">26 555</div><div class="t" style="left:717.20px;width:300px;text-align:right;top:70.80px;font-size:10.3px;line-height:10.3px;font-weight:400;color:#1c2b33">20 455</div><div class="t" style="left:811.80px;width:300px;text-align:right;top:70.80px;font-size:10.3px;line-height:10.3px;font-weight:400;color:#1c2b33">—</div><div class="t" style="left:906.80px;width:300px;text-align:right;top:70.80px;font-size:10.3px;line-height:10.3px;font-weight:400;color:#1c2b33">—</div><div class="t" style="left:1001.50px;width:300px;text-align:right;top:70.80px;font-size:10.3px;line-height:10.3px;font-weight:400;color:#1c2b33">—</div><div class="t" style="left:1313.80px;top:70.80px;font-size:10.3px;line-height:10.3px;font-weight:400;color:#1c2b33">7 сен 202...</div><div class="t" style="left:1384.70px;top:70.80px;font-size:10.3px;line-height:10.3px;font-weight:400;color:#1c2b33">7...</div><div class="t" style="left:1384.70px;top:84.69px;font-size:8.9px;line-height:8.9px;font-weight:400;color:#8a9198">Вс...</div><div class="t" style="left:1249.00px;width:300px;text-align:right;top:70.80px;font-size:10.3px;line-height:10.3px;font-weight:400;color:#1c2b33">Максимальное количество</div><div class="t" style="left:1249.00px;width:300px;text-align:right;top:84.69px;font-size:8.9px;line-height:8.9px;font-weight:400;color:#8a9198">Клики по ссылке</div><div class="t" style="left:1561.70px;top:70.80px;font-size:10.3px;line-height:10.3px;font-weight:400;color:#1c2b33">17 авг 2025 г., 09:12</div><div class="t" style="left:1561.70px;top:84.69px;font-size:8.9px;line-height:8.9px;font-weight:400;color:#8a9198">232 д. назад</div><div class="b" style="left:8.7px;top:105.88px;width:26.6px;height:15.3px;border-radius:8px;background:#e1ecf7;border:1px solid #d3dbe3;box-sizing:border-box"></div><div class="b" style="left:20.70px;top:106.33px;width:14.4px;height:14.4px;border-radius:50%;background:#0a72c2"></div><div class="b" style="left:61.5px;top:96.88px;width:32.5px;height:32.66px;overflow:hidden"><svg style="display:block;width:100%;height:100%;filter:blur(0.45px)" viewBox="0 0 33 33" preserveAspectRatio="none"><rect width="33" height="33" fill="#2e2824"/><path d="M0 22 L33 12 L33 29 L0 30 Z" fill="#94806f"/><path d="M6 20 L33 13 L33 21 L8 27 Z" fill="#a8937f"/><path d="M0 21 L7 24 L6 30 L0 30 Z" fill="#bdbdc0"/><path d="M25 23 L33 19 L33 29 L27 29 Z" fill="#7f8aa0"/><path d="M1 23 Q10 4 33 5" stroke="#e4e2de" stroke-width="1.7" fill="none"/><path d="M3 19 L9 11 L15 8 L22 6 L30 6 M4 22 L11 12 L15 21 L20 8 L25 18 L29 7 L32 15 M2 20 L30 15 M7 14 L31 11 M11 12 L25 18 M20 8 L32 15" stroke="#dcd9d4" stroke-width="1" fill="none"/><rect x="3" y="29.6" width="27" height="1.2" fill="#d23a3e"/><rect x="0" y="30.8" width="33" height="2.2" fill="#3a3532"/></svg></div><div class="t" style="left:99.80px;top:103.36px;font-size:10.3px;line-height:10.3px;font-weight:400;color:#1c2b33">Ф_3</div><div class="b" style="left:386px;top:103.33px;width:8.3px;height:8.3px;border-radius:50%;background:#c9d0d7"></div><div class="t" style="left:400.00px;top:103.36px;font-size:10.3px;line-height:10.3px;font-weight:400;color:#1c2b33">Завершена</div><div class="t" style="left:281.70px;width:300px;text-align:right;top:103.36px;font-size:10.3px;line-height:10.3px;font-weight:400;color:#1c2b33">881</div><div class="t" style="left:281.70px;width:300px;text-align:right;top:117.25px;font-size:8.9px;line-height:8.9px;font-weight:400;color:#8a9198">Клики по ссылке</div><div class="t" style="left:378.90px;width:300px;text-align:right;top:103.36px;font-size:10.3px;line-height:10.3px;font-weight:400;color:#1c2b33">22,96 $</div><div class="t" style="left:527.70px;width:300px;text-align:right;top:103.36px;font-size:10.3px;line-height:10.3px;font-weight:400;color:#1c2b33">0,03 $</div><div class="t" style="left:527.70px;width:300px;text-align:right;top:117.25px;font-size:8.9px;line-height:8.9px;font-weight:400;color:#8a9198">За клик по ссылке</div><div class="t" style="left:622.20px;width:300px;text-align:right;top:103.36px;font-size:10.3px;line-height:10.3px;font-weight:400;color:#1c2b33">18 161</div><div class="t" style="left:717.20px;width:300px;text-align:right;top:103.36px;font-size:10.3px;line-height:10.3px;font-weight:400;color:#1c2b33">16 223</div><div class="t" style="left:811.80px;width:300px;text-align:right;top:103.36px;font-size:10.3px;line-height:10.3px;font-weight:400;color:#1c2b33">—</div><div class="t" style="left:906.80px;width:300px;text-align:right;top:103.36px;font-size:10.3px;line-height:10.3px;font-weight:400;color:#1c2b33">1</div><div class="t" style="left:1001.50px;width:300px;text-align:right;top:103.36px;font-size:10.3px;line-height:10.3px;font-weight:400;color:#1c2b33">—</div><div class="t" style="left:1313.80px;top:103.36px;font-size:10.3px;line-height:10.3px;font-weight:400;color:#1c2b33">7 сен 202...</div><div class="t" style="left:1384.70px;top:103.36px;font-size:10.3px;line-height:10.3px;font-weight:400;color:#1c2b33">7...</div><div class="t" style="left:1384.70px;top:117.25px;font-size:8.9px;line-height:8.9px;font-weight:400;color:#8a9198">Вс...</div><div class="t" style="left:1249.00px;width:300px;text-align:right;top:103.36px;font-size:10.3px;line-height:10.3px;font-weight:400;color:#1c2b33">Максимальное количество</div><div class="t" style="left:1249.00px;width:300px;text-align:right;top:117.25px;font-size:8.9px;line-height:8.9px;font-weight:400;color:#8a9198">Клики по ссылке</div><div class="t" style="left:1561.70px;top:103.36px;font-size:10.3px;line-height:10.3px;font-weight:400;color:#1c2b33">17 авг 2025 г., 09:12</div><div class="t" style="left:1561.70px;top:117.25px;font-size:8.9px;line-height:8.9px;font-weight:400;color:#8a9198">232 д. назад</div><div class="b" style="left:8.7px;top:138.44px;width:26.6px;height:15.3px;border-radius:8px;background:#e1ecf7;border:1px solid #d3dbe3;box-sizing:border-box"></div><div class="b" style="left:20.70px;top:138.89px;width:14.4px;height:14.4px;border-radius:50%;background:#0a72c2"></div><div class="b" style="left:61.5px;top:129.44px;width:32.5px;height:32.66px;overflow:hidden"><svg style="display:block;width:100%;height:100%;filter:blur(0.45px)" viewBox="0 0 33 33" preserveAspectRatio="none"><rect width="33" height="33" fill="#5e5046"/><path d="M11 5 L28 2 L33 14 L33 26 L17 31 L10 14 Z" fill="#1d1b1b"/><path d="M13 6 L27 3 L29 7 L14 10 Z" fill="#3a3636"/><rect x="19" y="15" width="8" height="6" fill="#9a9490" transform="rotate(-12 23 18)"/><path d="M0 12 Q8 10 12 18 L11 30 L0 30 Z" fill="#a47a68"/><path d="M2 16 Q6 18 8 24" stroke="#8c6656" stroke-width="1" fill="none"/><rect x="4" y="30" width="26" height="1.3" fill="#d23a3e"/></svg></div><div class="t" style="left:99.80px;top:135.92px;font-size:10.3px;line-height:10.3px;font-weight:400;color:#1c2b33">Ф_11</div><div class="b" style="left:386px;top:135.89px;width:8.3px;height:8.3px;border-radius:50%;background:#c9d0d7"></div><div class="t" style="left:400.00px;top:135.92px;font-size:10.3px;line-height:10.3px;font-weight:400;color:#1c2b33">Завершена</div><div class="t" style="left:281.70px;width:300px;text-align:right;top:135.92px;font-size:10.3px;line-height:10.3px;font-weight:400;color:#1c2b33">430</div><div class="t" style="left:281.70px;width:300px;text-align:right;top:149.81px;font-size:8.9px;line-height:8.9px;font-weight:400;color:#8a9198">Клики по ссылке</div><div class="t" style="left:378.90px;width:300px;text-align:right;top:135.92px;font-size:10.3px;line-height:10.3px;font-weight:400;color:#1c2b33">10,82 $</div><div class="t" style="left:527.70px;width:300px;text-align:right;top:135.92px;font-size:10.3px;line-height:10.3px;font-weight:400;color:#1c2b33">0,03 $</div><div class="t" style="left:527.70px;width:300px;text-align:right;top:149.81px;font-size:8.9px;line-height:8.9px;font-weight:400;color:#8a9198">За клик по ссылке</div><div class="t" style="left:622.20px;width:300px;text-align:right;top:135.92px;font-size:10.3px;line-height:10.3px;font-weight:400;color:#1c2b33">9 313</div><div class="t" style="left:717.20px;width:300px;text-align:right;top:135.92px;font-size:10.3px;line-height:10.3px;font-weight:400;color:#1c2b33">7 321</div><div class="t" style="left:811.80px;width:300px;text-align:right;top:135.92px;font-size:10.3px;line-height:10.3px;font-weight:400;color:#1c2b33">—</div><div class="t" style="left:906.80px;width:300px;text-align:right;top:135.92px;font-size:10.3px;line-height:10.3px;font-weight:400;color:#1c2b33">—</div><div class="t" style="left:1001.50px;width:300px;text-align:right;top:135.92px;font-size:10.3px;line-height:10.3px;font-weight:400;color:#1c2b33">—</div><div class="t" style="left:1313.80px;top:135.92px;font-size:10.3px;line-height:10.3px;font-weight:400;color:#1c2b33">7 сен 202...</div><div class="t" style="left:1384.70px;top:135.92px;font-size:10.3px;line-height:10.3px;font-weight:400;color:#1c2b33">7...</div><div class="t" style="left:1384.70px;top:149.81px;font-size:8.9px;line-height:8.9px;font-weight:400;color:#8a9198">Вс...</div><div class="t" style="left:1249.00px;width:300px;text-align:right;top:135.92px;font-size:10.3px;line-height:10.3px;font-weight:400;color:#1c2b33">Максимальное количество</div><div class="t" style="left:1249.00px;width:300px;text-align:right;top:149.81px;font-size:8.9px;line-height:8.9px;font-weight:400;color:#8a9198">Клики по ссылке</div><div class="t" style="left:1561.70px;top:135.92px;font-size:10.3px;line-height:10.3px;font-weight:400;color:#1c2b33">17 авг 2025 г., 09:12</div><div class="t" style="left:1561.70px;top:149.81px;font-size:8.9px;line-height:8.9px;font-weight:400;color:#8a9198">232 д. назад</div><div class="b" style="left:8.7px;top:171.00px;width:26.6px;height:15.3px;border-radius:8px;background:#e1ecf7;border:1px solid #d3dbe3;box-sizing:border-box"></div><div class="b" style="left:20.70px;top:171.45px;width:14.4px;height:14.4px;border-radius:50%;background:#0a72c2"></div><div class="b" style="left:61.5px;top:162.00px;width:32.5px;height:32.66px;overflow:hidden"><svg style="display:block;width:100%;height:100%;filter:blur(0.45px)" viewBox="0 0 33 33" preserveAspectRatio="none"><rect width="33" height="33" fill="#4a3d36"/><path d="M6 9 L24 4 L31 17 L12 24 Z" fill="#151313"/><path d="M10 13 L19 10 L20 13 L11 16 Z" fill="#b5cde0"/><path d="M0 14 Q8 16 14 24 L16 30 L0 30 Z" fill="#6d4a40"/><path d="M14 22 Q24 20 33 24 V30 H14 Z" fill="#7a5a4c"/><rect x="4" y="30" width="26" height="1.3" fill="#d23a3e"/></svg></div><div class="t" style="left:99.80px;top:168.48px;font-size:10.3px;line-height:10.3px;font-weight:400;color:#1c2b33">Ф_4</div><div class="b" style="left:386px;top:168.45px;width:8.3px;height:8.3px;border-radius:50%;background:#c9d0d7"></div><div class="t" style="left:400.00px;top:168.48px;font-size:10.3px;line-height:10.3px;font-weight:400;color:#1c2b33">Завершена</div><div class="t" style="left:281.70px;width:300px;text-align:right;top:168.48px;font-size:10.3px;line-height:10.3px;font-weight:400;color:#1c2b33">324</div><div class="t" style="left:281.70px;width:300px;text-align:right;top:182.37px;font-size:8.9px;line-height:8.9px;font-weight:400;color:#8a9198">Клики по ссылке</div><div class="t" style="left:378.90px;width:300px;text-align:right;top:168.48px;font-size:10.3px;line-height:10.3px;font-weight:400;color:#1c2b33">8,18 $</div><div class="t" style="left:527.70px;width:300px;text-align:right;top:168.48px;font-size:10.3px;line-height:10.3px;font-weight:400;color:#1c2b33">0,03 $</div><div class="t" style="left:527.70px;width:300px;text-align:right;top:182.37px;font-size:8.9px;line-height:8.9px;font-weight:400;color:#8a9198">За клик по ссылке</div><div class="t" style="left:622.20px;width:300px;text-align:right;top:168.48px;font-size:10.3px;line-height:10.3px;font-weight:400;color:#1c2b33">6 364</div><div class="t" style="left:717.20px;width:300px;text-align:right;top:168.48px;font-size:10.3px;line-height:10.3px;font-weight:400;color:#1c2b33">5 654</div><div class="t" style="left:811.80px;width:300px;text-align:right;top:168.48px;font-size:10.3px;line-height:10.3px;font-weight:400;color:#1c2b33">—</div><div class="t" style="left:906.80px;width:300px;text-align:right;top:168.48px;font-size:10.3px;line-height:10.3px;font-weight:400;color:#1c2b33">—</div><div class="t" style="left:1001.50px;width:300px;text-align:right;top:168.48px;font-size:10.3px;line-height:10.3px;font-weight:400;color:#1c2b33">—</div><div class="t" style="left:1313.80px;top:168.48px;font-size:10.3px;line-height:10.3px;font-weight:400;color:#1c2b33">7 сен 202...</div><div class="t" style="left:1384.70px;top:168.48px;font-size:10.3px;line-height:10.3px;font-weight:400;color:#1c2b33">7...</div><div class="t" style="left:1384.70px;top:182.37px;font-size:8.9px;line-height:8.9px;font-weight:400;color:#8a9198">Вс...</div><div class="t" style="left:1249.00px;width:300px;text-align:right;top:168.48px;font-size:10.3px;line-height:10.3px;font-weight:400;color:#1c2b33">Максимальное количество</div><div class="t" style="left:1249.00px;width:300px;text-align:right;top:182.37px;font-size:8.9px;line-height:8.9px;font-weight:400;color:#8a9198">Клики по ссылке</div><div class="t" style="left:1561.70px;top:168.48px;font-size:10.3px;line-height:10.3px;font-weight:400;color:#1c2b33">17 авг 2025 г., 09:12</div><div class="t" style="left:1561.70px;top:182.37px;font-size:8.9px;line-height:8.9px;font-weight:400;color:#8a9198">232 д. назад</div><div class="b" style="left:8.7px;top:203.56px;width:26.6px;height:15.3px;border-radius:8px;background:#e1ecf7;border:1px solid #d3dbe3;box-sizing:border-box"></div><div class="b" style="left:20.70px;top:204.01px;width:14.4px;height:14.4px;border-radius:50%;background:#0a72c2"></div><div class="b" style="left:61.5px;top:194.56px;width:32.5px;height:32.66px;overflow:hidden"><svg style="display:block;width:100%;height:100%;filter:blur(0.45px)" viewBox="0 0 33 33" preserveAspectRatio="none"><rect width="33" height="33" fill="#4a3d36"/><path d="M6 9 L24 4 L31 17 L12 24 Z" fill="#151313"/><path d="M10 13 L19 10 L20 13 L11 16 Z" fill="#b5cde0"/><path d="M0 14 Q8 16 14 24 L16 30 L0 30 Z" fill="#6d4a40"/><path d="M14 22 Q24 20 33 24 V30 H14 Z" fill="#7a5a4c"/><rect x="4" y="30" width="26" height="1.3" fill="#d23a3e"/></svg></div><div class="t" style="left:99.80px;top:201.04px;font-size:10.3px;line-height:10.3px;font-weight:400;color:#1c2b33">Ф_4</div><div class="b" style="left:386px;top:201.01px;width:8.3px;height:8.3px;border-radius:50%;background:#c9d0d7"></div><div class="t" style="left:400.00px;top:201.04px;font-size:10.3px;line-height:10.3px;font-weight:400;color:#1c2b33">Завершена</div><div class="t" style="left:281.70px;width:300px;text-align:right;top:201.04px;font-size:10.3px;line-height:10.3px;font-weight:400;color:#1c2b33">321</div><div class="t" style="left:281.70px;width:300px;text-align:right;top:214.93px;font-size:8.9px;line-height:8.9px;font-weight:400;color:#8a9198">Клики по ссылке</div><div class="t" style="left:378.90px;width:300px;text-align:right;top:201.04px;font-size:10.3px;line-height:10.3px;font-weight:400;color:#1c2b33">8,67 $</div><div class="t" style="left:527.70px;width:300px;text-align:right;top:201.04px;font-size:10.3px;line-height:10.3px;font-weight:400;color:#1c2b33">0,03 $</div><div class="t" style="left:527.70px;width:300px;text-align:right;top:214.93px;font-size:8.9px;line-height:8.9px;font-weight:400;color:#8a9198">За клик по ссылке</div><div class="t" style="left:622.20px;width:300px;text-align:right;top:201.04px;font-size:10.3px;line-height:10.3px;font-weight:400;color:#1c2b33">6 696</div><div class="t" style="left:717.20px;width:300px;text-align:right;top:201.04px;font-size:10.3px;line-height:10.3px;font-weight:400;color:#1c2b33">5 931</div><div class="t" style="left:811.80px;width:300px;text-align:right;top:201.04px;font-size:10.3px;line-height:10.3px;font-weight:400;color:#1c2b33">—</div><div class="t" style="left:906.80px;width:300px;text-align:right;top:201.04px;font-size:10.3px;line-height:10.3px;font-weight:400;color:#1c2b33">—</div><div class="t" style="left:1001.50px;width:300px;text-align:right;top:201.04px;font-size:10.3px;line-height:10.3px;font-weight:400;color:#1c2b33">—</div><div class="t" style="left:1313.80px;top:201.04px;font-size:10.3px;line-height:10.3px;font-weight:400;color:#1c2b33">7 сен 202...</div><div class="t" style="left:1384.70px;top:201.04px;font-size:10.3px;line-height:10.3px;font-weight:400;color:#1c2b33">7...</div><div class="t" style="left:1384.70px;top:214.93px;font-size:8.9px;line-height:8.9px;font-weight:400;color:#8a9198">Вс...</div><div class="t" style="left:1249.00px;width:300px;text-align:right;top:201.04px;font-size:10.3px;line-height:10.3px;font-weight:400;color:#1c2b33">Максимальное количество</div><div class="t" style="left:1249.00px;width:300px;text-align:right;top:214.93px;font-size:8.9px;line-height:8.9px;font-weight:400;color:#8a9198">Клики по ссылке</div><div class="t" style="left:1561.70px;top:201.04px;font-size:10.3px;line-height:10.3px;font-weight:400;color:#1c2b33">17 авг 2025 г., 09:12</div><div class="t" style="left:1561.70px;top:214.93px;font-size:8.9px;line-height:8.9px;font-weight:400;color:#8a9198">232 д. назад</div><div class="b" style="left:8.7px;top:236.12px;width:26.6px;height:15.3px;border-radius:8px;background:#e1ecf7;border:1px solid #d3dbe3;box-sizing:border-box"></div><div class="b" style="left:20.70px;top:236.57px;width:14.4px;height:14.4px;border-radius:50%;background:#0a72c2"></div><div class="b" style="left:61.5px;top:227.12px;width:32.5px;height:32.66px;overflow:hidden"><svg style="display:block;width:100%;height:100%;filter:blur(0.45px)" viewBox="0 0 33 33" preserveAspectRatio="none"><rect width="33" height="33" fill="#4a3d36"/><path d="M6 9 L24 4 L31 17 L12 24 Z" fill="#151313"/><path d="M10 13 L19 10 L20 13 L11 16 Z" fill="#b5cde0"/><path d="M0 14 Q8 16 14 24 L16 30 L0 30 Z" fill="#6d4a40"/><path d="M14 22 Q24 20 33 24 V30 H14 Z" fill="#7a5a4c"/><rect x="4" y="30" width="26" height="1.3" fill="#d23a3e"/></svg></div><div class="t" style="left:99.80px;top:233.60px;font-size:10.3px;line-height:10.3px;font-weight:400;color:#1c2b33">Ф_4</div><div class="b" style="left:386px;top:233.57px;width:8.3px;height:8.3px;border-radius:50%;background:#c9d0d7"></div><div class="t" style="left:400.00px;top:233.60px;font-size:10.3px;line-height:10.3px;font-weight:400;color:#1c2b33">Завершена</div><div class="t" style="left:281.70px;width:300px;text-align:right;top:233.60px;font-size:10.3px;line-height:10.3px;font-weight:400;color:#1c2b33">218</div><div class="t" style="left:281.70px;width:300px;text-align:right;top:247.49px;font-size:8.9px;line-height:8.9px;font-weight:400;color:#8a9198">Клики по ссылке</div><div class="t" style="left:378.90px;width:300px;text-align:right;top:233.60px;font-size:10.3px;line-height:10.3px;font-weight:400;color:#1c2b33">6,36 $</div><div class="t" style="left:527.70px;width:300px;text-align:right;top:233.60px;font-size:10.3px;line-height:10.3px;font-weight:400;color:#1c2b33">0,03 $</div><div class="t" style="left:527.70px;width:300px;text-align:right;top:247.49px;font-size:8.9px;line-height:8.9px;font-weight:400;color:#8a9198">За клик по ссылке</div><div class="t" style="left:622.20px;width:300px;text-align:right;top:233.60px;font-size:10.3px;line-height:10.3px;font-weight:400;color:#1c2b33">5 236</div><div class="t" style="left:717.20px;width:300px;text-align:right;top:233.60px;font-size:10.3px;line-height:10.3px;font-weight:400;color:#1c2b33">4 427</div><div class="t" style="left:811.80px;width:300px;text-align:right;top:233.60px;font-size:10.3px;line-height:10.3px;font-weight:400;color:#1c2b33">—</div><div class="t" style="left:906.80px;width:300px;text-align:right;top:233.60px;font-size:10.3px;line-height:10.3px;font-weight:400;color:#1c2b33">—</div><div class="t" style="left:1001.50px;width:300px;text-align:right;top:233.60px;font-size:10.3px;line-height:10.3px;font-weight:400;color:#1c2b33">—</div><div class="t" style="left:1313.80px;top:233.60px;font-size:10.3px;line-height:10.3px;font-weight:400;color:#1c2b33">7 сен 202...</div><div class="t" style="left:1384.70px;top:233.60px;font-size:10.3px;line-height:10.3px;font-weight:400;color:#1c2b33">7...</div><div class="t" style="left:1384.70px;top:247.49px;font-size:8.9px;line-height:8.9px;font-weight:400;color:#8a9198">Вс...</div><div class="t" style="left:1249.00px;width:300px;text-align:right;top:233.60px;font-size:10.3px;line-height:10.3px;font-weight:400;color:#1c2b33">Максимальное количество</div><div class="t" style="left:1249.00px;width:300px;text-align:right;top:247.49px;font-size:8.9px;line-height:8.9px;font-weight:400;color:#8a9198">Клики по ссылке</div><div class="t" style="left:1561.70px;top:233.60px;font-size:10.3px;line-height:10.3px;font-weight:400;color:#1c2b33">17 авг 2025 г., 09:12</div><div class="t" style="left:1561.70px;top:247.49px;font-size:8.9px;line-height:8.9px;font-weight:400;color:#8a9198">232 д. назад</div><div class="b" style="left:8.7px;top:268.68px;width:26.6px;height:15.3px;border-radius:8px;background:#e1ecf7;border:1px solid #d3dbe3;box-sizing:border-box"></div><div class="b" style="left:20.70px;top:269.13px;width:14.4px;height:14.4px;border-radius:50%;background:#0a72c2"></div><div class="b" style="left:61.5px;top:259.68px;width:32.5px;height:32.66px;overflow:hidden"><svg style="display:block;width:100%;height:100%;filter:blur(0.45px)" viewBox="0 0 33 33" preserveAspectRatio="none"><rect width="33" height="33" fill="#242222"/><rect x="5" y="2" width="22" height="1" fill="#d8d4d2"/><path d="M22 4 L33 8 V30 L24 26 Z" fill="#3c3c3e"/><path d="M0 18 Q10 12 22 20 L26 26 L22 30 L0 30 Z" fill="#d7cbc4"/><path d="M4 22 Q12 20 18 25" stroke="#b7aaa2" stroke-width="1" fill="none"/><rect x="4" y="30" width="26" height="1.3" fill="#d23a3e"/></svg></div><div class="t" style="left:99.80px;top:266.16px;font-size:10.3px;line-height:10.3px;font-weight:400;color:#1c2b33">Ф_7</div><div class="b" style="left:386px;top:266.13px;width:8.3px;height:8.3px;border-radius:50%;background:#c9d0d7"></div><div class="t" style="left:400.00px;top:266.16px;font-size:10.3px;line-height:10.3px;font-weight:400;color:#1c2b33">Завершена</div><div class="t" style="left:281.70px;width:300px;text-align:right;top:266.16px;font-size:10.3px;line-height:10.3px;font-weight:400;color:#1c2b33">157</div><div class="t" style="left:281.70px;width:300px;text-align:right;top:280.05px;font-size:8.9px;line-height:8.9px;font-weight:400;color:#8a9198">Клики по ссылке</div><div class="t" style="left:378.90px;width:300px;text-align:right;top:266.16px;font-size:10.3px;line-height:10.3px;font-weight:400;color:#1c2b33">3,80 $</div><div class="t" style="left:527.70px;width:300px;text-align:right;top:266.16px;font-size:10.3px;line-height:10.3px;font-weight:400;color:#1c2b33">0,02 $</div><div class="t" style="left:527.70px;width:300px;text-align:right;top:280.05px;font-size:8.9px;line-height:8.9px;font-weight:400;color:#8a9198">За клик по ссылке</div><div class="t" style="left:622.20px;width:300px;text-align:right;top:266.16px;font-size:10.3px;line-height:10.3px;font-weight:400;color:#1c2b33">3 320</div><div class="t" style="left:717.20px;width:300px;text-align:right;top:266.16px;font-size:10.3px;line-height:10.3px;font-weight:400;color:#1c2b33">2 722</div><div class="t" style="left:811.80px;width:300px;text-align:right;top:266.16px;font-size:10.3px;line-height:10.3px;font-weight:400;color:#1c2b33">—</div><div class="t" style="left:906.80px;width:300px;text-align:right;top:266.16px;font-size:10.3px;line-height:10.3px;font-weight:400;color:#1c2b33">—</div><div class="t" style="left:1001.50px;width:300px;text-align:right;top:266.16px;font-size:10.3px;line-height:10.3px;font-weight:400;color:#1c2b33">—</div><div class="t" style="left:1313.80px;top:266.16px;font-size:10.3px;line-height:10.3px;font-weight:400;color:#1c2b33">7 сен 202...</div><div class="t" style="left:1384.70px;top:266.16px;font-size:10.3px;line-height:10.3px;font-weight:400;color:#1c2b33">7...</div><div class="t" style="left:1384.70px;top:280.05px;font-size:8.9px;line-height:8.9px;font-weight:400;color:#8a9198">Вс...</div><div class="t" style="left:1249.00px;width:300px;text-align:right;top:266.16px;font-size:10.3px;line-height:10.3px;font-weight:400;color:#1c2b33">Максимальное количество</div><div class="t" style="left:1249.00px;width:300px;text-align:right;top:280.05px;font-size:8.9px;line-height:8.9px;font-weight:400;color:#8a9198">Клики по ссылке</div><div class="t" style="left:1561.70px;top:266.16px;font-size:10.3px;line-height:10.3px;font-weight:400;color:#1c2b33">17 авг 2025 г., 09:12</div><div class="t" style="left:1561.70px;top:280.05px;font-size:8.9px;line-height:8.9px;font-weight:400;color:#8a9198">232 д. назад</div><div class="b" style="left:8.7px;top:301.24px;width:26.6px;height:15.3px;border-radius:8px;background:#e1ecf7;border:1px solid #d3dbe3;box-sizing:border-box"></div><div class="b" style="left:20.70px;top:301.69px;width:14.4px;height:14.4px;border-radius:50%;background:#0a72c2"></div><div class="b" style="left:61.5px;top:292.24px;width:32.5px;height:32.66px;overflow:hidden"><svg style="display:block;width:100%;height:100%;filter:blur(0.45px)" viewBox="0 0 33 33" preserveAspectRatio="none"><rect width="33" height="33" fill="#5e5046"/><path d="M11 5 L28 2 L33 14 L33 26 L17 31 L10 14 Z" fill="#1d1b1b"/><path d="M13 6 L27 3 L29 7 L14 10 Z" fill="#3a3636"/><rect x="19" y="15" width="8" height="6" fill="#9a9490" transform="rotate(-12 23 18)"/><path d="M0 12 Q8 10 12 18 L11 30 L0 30 Z" fill="#a47a68"/><path d="M2 16 Q6 18 8 24" stroke="#8c6656" stroke-width="1" fill="none"/><rect x="4" y="30" width="26" height="1.3" fill="#d23a3e"/></svg></div><div class="t" style="left:99.80px;top:298.72px;font-size:10.3px;line-height:10.3px;font-weight:400;color:#1c2b33">Ф_11</div><div class="b" style="left:386px;top:298.69px;width:8.3px;height:8.3px;border-radius:50%;background:#c9d0d7"></div><div class="t" style="left:400.00px;top:298.72px;font-size:10.3px;line-height:10.3px;font-weight:400;color:#1c2b33">Завершена</div><div class="t" style="left:281.70px;width:300px;text-align:right;top:298.72px;font-size:10.3px;line-height:10.3px;font-weight:400;color:#1c2b33">156</div><div class="t" style="left:281.70px;width:300px;text-align:right;top:312.61px;font-size:8.9px;line-height:8.9px;font-weight:400;color:#8a9198">Клики по ссылке</div><div class="t" style="left:378.90px;width:300px;text-align:right;top:298.72px;font-size:10.3px;line-height:10.3px;font-weight:400;color:#1c2b33">4,80 $</div><div class="t" style="left:527.70px;width:300px;text-align:right;top:298.72px;font-size:10.3px;line-height:10.3px;font-weight:400;color:#1c2b33">0,03 $</div><div class="t" style="left:527.70px;width:300px;text-align:right;top:312.61px;font-size:8.9px;line-height:8.9px;font-weight:400;color:#8a9198">За клик по ссылке</div><div class="t" style="left:622.20px;width:300px;text-align:right;top:298.72px;font-size:10.3px;line-height:10.3px;font-weight:400;color:#1c2b33">4 681</div><div class="t" style="left:717.20px;width:300px;text-align:right;top:298.72px;font-size:10.3px;line-height:10.3px;font-weight:400;color:#1c2b33">4 321</div><div class="t" style="left:811.80px;width:300px;text-align:right;top:298.72px;font-size:10.3px;line-height:10.3px;font-weight:400;color:#1c2b33">—</div><div class="t" style="left:906.80px;width:300px;text-align:right;top:298.72px;font-size:10.3px;line-height:10.3px;font-weight:400;color:#1c2b33">—</div><div class="t" style="left:1001.50px;width:300px;text-align:right;top:298.72px;font-size:10.3px;line-height:10.3px;font-weight:400;color:#1c2b33">—</div><div class="t" style="left:1313.80px;top:298.72px;font-size:10.3px;line-height:10.3px;font-weight:400;color:#1c2b33">7 сен 202...</div><div class="t" style="left:1384.70px;top:298.72px;font-size:10.3px;line-height:10.3px;font-weight:400;color:#1c2b33">7...</div><div class="t" style="left:1384.70px;top:312.61px;font-size:8.9px;line-height:8.9px;font-weight:400;color:#8a9198">Вс...</div><div class="t" style="left:1249.00px;width:300px;text-align:right;top:298.72px;font-size:10.3px;line-height:10.3px;font-weight:400;color:#1c2b33">Максимальное количество</div><div class="t" style="left:1249.00px;width:300px;text-align:right;top:312.61px;font-size:8.9px;line-height:8.9px;font-weight:400;color:#8a9198">Клики по ссылке</div><div class="t" style="left:1561.70px;top:298.72px;font-size:10.3px;line-height:10.3px;font-weight:400;color:#1c2b33">17 авг 2025 г., 09:12</div><div class="t" style="left:1561.70px;top:312.61px;font-size:8.9px;line-height:8.9px;font-weight:400;color:#8a9198">232 д. назад</div><div class="b" style="left:8.7px;top:333.80px;width:26.6px;height:15.3px;border-radius:8px;background:#e1ecf7;border:1px solid #d3dbe3;box-sizing:border-box"></div><div class="b" style="left:20.70px;top:334.25px;width:14.4px;height:14.4px;border-radius:50%;background:#0a72c2"></div><div class="b" style="left:61.5px;top:324.80px;width:32.5px;height:32.66px;overflow:hidden"><svg style="display:block;width:100%;height:100%;filter:blur(0.45px)" viewBox="0 0 33 33" preserveAspectRatio="none"><rect width="33" height="33" fill="#d9d5c6"/><path d="M10 0 Q8 11 10 21 M19 0 Q17 11 19 22 M27 0 Q25 11 27 22" stroke="#aaa596" stroke-width="1.5" fill="none"/><path d="M0 0 L4 0 L4 22 L0 22 Z" fill="#a09a8b"/><path d="M0 21 Q16 18 33 21 V33 H0 Z" fill="#4a4842"/><path d="M6 23 L14 22 L15 29 L6 29 Z" fill="#2e2d2a"/><path d="M22 22 L30 22 L31 29 L21 29 Z" fill="#5c5a52"/><rect x="5" y="30" width="24" height="1.3" fill="#d23a3e"/></svg></div><div class="t" style="left:99.80px;top:331.28px;font-size:10.3px;line-height:10.3px;font-weight:400;color:#1c2b33">Ф_6</div><div class="b" style="left:386px;top:331.25px;width:8.3px;height:8.3px;border-radius:50%;background:#c9d0d7"></div><div class="t" style="left:400.00px;top:331.28px;font-size:10.3px;line-height:10.3px;font-weight:400;color:#1c2b33">Завершена</div><div class="t" style="left:281.70px;width:300px;text-align:right;top:331.28px;font-size:10.3px;line-height:10.3px;font-weight:400;color:#1c2b33">143</div><div class="t" style="left:281.70px;width:300px;text-align:right;top:345.17px;font-size:8.9px;line-height:8.9px;font-weight:400;color:#8a9198">Клики по ссылке</div><div class="t" style="left:378.90px;width:300px;text-align:right;top:331.28px;font-size:10.3px;line-height:10.3px;font-weight:400;color:#1c2b33">4,10 $</div><div class="t" style="left:527.70px;width:300px;text-align:right;top:331.28px;font-size:10.3px;line-height:10.3px;font-weight:400;color:#1c2b33">0,03 $</div><div class="t" style="left:527.70px;width:300px;text-align:right;top:345.17px;font-size:8.9px;line-height:8.9px;font-weight:400;color:#8a9198">За клик по ссылке</div><div class="t" style="left:622.20px;width:300px;text-align:right;top:331.28px;font-size:10.3px;line-height:10.3px;font-weight:400;color:#1c2b33">3 279</div><div class="t" style="left:717.20px;width:300px;text-align:right;top:331.28px;font-size:10.3px;line-height:10.3px;font-weight:400;color:#1c2b33">2 914</div><div class="t" style="left:811.80px;width:300px;text-align:right;top:331.28px;font-size:10.3px;line-height:10.3px;font-weight:400;color:#1c2b33">—</div><div class="t" style="left:906.80px;width:300px;text-align:right;top:331.28px;font-size:10.3px;line-height:10.3px;font-weight:400;color:#1c2b33">—</div><div class="t" style="left:1001.50px;width:300px;text-align:right;top:331.28px;font-size:10.3px;line-height:10.3px;font-weight:400;color:#1c2b33">—</div><div class="t" style="left:1313.80px;top:331.28px;font-size:10.3px;line-height:10.3px;font-weight:400;color:#1c2b33">7 сен 202...</div><div class="t" style="left:1384.70px;top:331.28px;font-size:10.3px;line-height:10.3px;font-weight:400;color:#1c2b33">7...</div><div class="t" style="left:1384.70px;top:345.17px;font-size:8.9px;line-height:8.9px;font-weight:400;color:#8a9198">Вс...</div><div class="t" style="left:1249.00px;width:300px;text-align:right;top:331.28px;font-size:10.3px;line-height:10.3px;font-weight:400;color:#1c2b33">Максимальное количество</div><div class="t" style="left:1249.00px;width:300px;text-align:right;top:345.17px;font-size:8.9px;line-height:8.9px;font-weight:400;color:#8a9198">Клики по ссылке</div><div class="t" style="left:1561.70px;top:331.28px;font-size:10.3px;line-height:10.3px;font-weight:400;color:#1c2b33">17 авг 2025 г., 09:12</div><div class="t" style="left:1561.70px;top:345.17px;font-size:8.9px;line-height:8.9px;font-weight:400;color:#8a9198">232 д. назад</div><div class="b" style="left:8.7px;top:366.36px;width:26.6px;height:15.3px;border-radius:8px;background:#e1ecf7;border:1px solid #d3dbe3;box-sizing:border-box"></div><div class="b" style="left:20.70px;top:366.81px;width:14.4px;height:14.4px;border-radius:50%;background:#0a72c2"></div><div class="b" style="left:61.5px;top:357.36px;width:32.5px;height:32.66px;overflow:hidden"><svg style="display:block;width:100%;height:100%;filter:blur(0.45px)" viewBox="0 0 33 33" preserveAspectRatio="none"><rect width="33" height="33" fill="#d9d5c6"/><path d="M10 0 Q8 11 10 21 M19 0 Q17 11 19 22 M27 0 Q25 11 27 22" stroke="#aaa596" stroke-width="1.5" fill="none"/><path d="M0 0 L4 0 L4 22 L0 22 Z" fill="#a09a8b"/><path d="M0 21 Q16 18 33 21 V33 H0 Z" fill="#4a4842"/><path d="M6 23 L14 22 L15 29 L6 29 Z" fill="#2e2d2a"/><path d="M22 22 L30 22 L31 29 L21 29 Z" fill="#5c5a52"/><rect x="5" y="30" width="24" height="1.3" fill="#d23a3e"/></svg></div><div class="t" style="left:99.80px;top:363.84px;font-size:10.3px;line-height:10.3px;font-weight:400;color:#1c2b33">Ф_6</div><div class="b" style="left:386px;top:363.81px;width:8.3px;height:8.3px;border-radius:50%;background:#c9d0d7"></div><div class="t" style="left:400.00px;top:363.84px;font-size:10.3px;line-height:10.3px;font-weight:400;color:#1c2b33">Завершена</div><div class="t" style="left:281.70px;width:300px;text-align:right;top:363.84px;font-size:10.3px;line-height:10.3px;font-weight:400;color:#1c2b33">135</div><div class="t" style="left:281.70px;width:300px;text-align:right;top:377.73px;font-size:8.9px;line-height:8.9px;font-weight:400;color:#8a9198">Клики по ссылке</div><div class="t" style="left:378.90px;width:300px;text-align:right;top:363.84px;font-size:10.3px;line-height:10.3px;font-weight:400;color:#1c2b33">3,73 $</div><div class="t" style="left:527.70px;width:300px;text-align:right;top:363.84px;font-size:10.3px;line-height:10.3px;font-weight:400;color:#1c2b33">0,03 $</div><div class="t" style="left:527.70px;width:300px;text-align:right;top:377.73px;font-size:8.9px;line-height:8.9px;font-weight:400;color:#8a9198">За клик по ссылке</div><div class="t" style="left:622.20px;width:300px;text-align:right;top:363.84px;font-size:10.3px;line-height:10.3px;font-weight:400;color:#1c2b33">3 205</div><div class="t" style="left:717.20px;width:300px;text-align:right;top:363.84px;font-size:10.3px;line-height:10.3px;font-weight:400;color:#1c2b33">2 918</div><div class="t" style="left:811.80px;width:300px;text-align:right;top:363.84px;font-size:10.3px;line-height:10.3px;font-weight:400;color:#1c2b33">—</div><div class="t" style="left:906.80px;width:300px;text-align:right;top:363.84px;font-size:10.3px;line-height:10.3px;font-weight:400;color:#1c2b33">—</div><div class="t" style="left:1001.50px;width:300px;text-align:right;top:363.84px;font-size:10.3px;line-height:10.3px;font-weight:400;color:#1c2b33">—</div><div class="t" style="left:1313.80px;top:363.84px;font-size:10.3px;line-height:10.3px;font-weight:400;color:#1c2b33">7 сен 202...</div><div class="t" style="left:1384.70px;top:363.84px;font-size:10.3px;line-height:10.3px;font-weight:400;color:#1c2b33">7...</div><div class="t" style="left:1384.70px;top:377.73px;font-size:8.9px;line-height:8.9px;font-weight:400;color:#8a9198">Вс...</div><div class="t" style="left:1249.00px;width:300px;text-align:right;top:363.84px;font-size:10.3px;line-height:10.3px;font-weight:400;color:#1c2b33">Максимальное количество</div><div class="t" style="left:1249.00px;width:300px;text-align:right;top:377.73px;font-size:8.9px;line-height:8.9px;font-weight:400;color:#8a9198">Клики по ссылке</div><div class="t" style="left:1561.70px;top:363.84px;font-size:10.3px;line-height:10.3px;font-weight:400;color:#1c2b33">17 авг 2025 г., 09:12</div><div class="t" style="left:1561.70px;top:377.73px;font-size:8.9px;line-height:8.9px;font-weight:400;color:#8a9198">232 д. назад</div><div class="b" style="left:8.7px;top:398.92px;width:26.6px;height:15.3px;border-radius:8px;background:#e1ecf7;border:1px solid #d3dbe3;box-sizing:border-box"></div><div class="b" style="left:20.70px;top:399.37px;width:14.4px;height:14.4px;border-radius:50%;background:#0a72c2"></div><div class="b" style="left:61.5px;top:389.92px;width:32.5px;height:32.66px;overflow:hidden"><svg style="display:block;width:100%;height:100%;filter:blur(0.45px)" viewBox="0 0 33 33" preserveAspectRatio="none"><rect width="33" height="33" fill="#5e5046"/><path d="M11 5 L28 2 L33 14 L33 26 L17 31 L10 14 Z" fill="#1d1b1b"/><path d="M13 6 L27 3 L29 7 L14 10 Z" fill="#3a3636"/><rect x="19" y="15" width="8" height="6" fill="#9a9490" transform="rotate(-12 23 18)"/><path d="M0 12 Q8 10 12 18 L11 30 L0 30 Z" fill="#a47a68"/><path d="M2 16 Q6 18 8 24" stroke="#8c6656" stroke-width="1" fill="none"/><rect x="4" y="30" width="26" height="1.3" fill="#d23a3e"/></svg></div><div class="t" style="left:99.80px;top:396.40px;font-size:10.3px;line-height:10.3px;font-weight:400;color:#1c2b33">Ф_11</div><div class="b" style="left:386px;top:396.37px;width:8.3px;height:8.3px;border-radius:50%;background:#c9d0d7"></div><div class="t" style="left:400.00px;top:396.40px;font-size:10.3px;line-height:10.3px;font-weight:400;color:#1c2b33">Завершена</div><div class="t" style="left:281.70px;width:300px;text-align:right;top:396.40px;font-size:10.3px;line-height:10.3px;font-weight:400;color:#1c2b33">120</div><div class="t" style="left:281.70px;width:300px;text-align:right;top:410.29px;font-size:8.9px;line-height:8.9px;font-weight:400;color:#8a9198">Клики по ссылке</div><div class="t" style="left:378.90px;width:300px;text-align:right;top:396.40px;font-size:10.3px;line-height:10.3px;font-weight:400;color:#1c2b33">3,16 $</div><div class="t" style="left:527.70px;width:300px;text-align:right;top:396.40px;font-size:10.3px;line-height:10.3px;font-weight:400;color:#1c2b33">0,03 $</div><div class="t" style="left:527.70px;width:300px;text-align:right;top:410.29px;font-size:8.9px;line-height:8.9px;font-weight:400;color:#8a9198">За клик по ссылке</div><div class="t" style="left:622.20px;width:300px;text-align:right;top:396.40px;font-size:10.3px;line-height:10.3px;font-weight:400;color:#1c2b33">2 806</div><div class="t" style="left:717.20px;width:300px;text-align:right;top:396.40px;font-size:10.3px;line-height:10.3px;font-weight:400;color:#1c2b33">2 570</div><div class="t" style="left:811.80px;width:300px;text-align:right;top:396.40px;font-size:10.3px;line-height:10.3px;font-weight:400;color:#1c2b33">—</div><div class="t" style="left:906.80px;width:300px;text-align:right;top:396.40px;font-size:10.3px;line-height:10.3px;font-weight:400;color:#1c2b33">1</div><div class="t" style="left:1001.50px;width:300px;text-align:right;top:396.40px;font-size:10.3px;line-height:10.3px;font-weight:400;color:#1c2b33">—</div><div class="t" style="left:1313.80px;top:396.40px;font-size:10.3px;line-height:10.3px;font-weight:400;color:#1c2b33">7 сен 202...</div><div class="t" style="left:1384.70px;top:396.40px;font-size:10.3px;line-height:10.3px;font-weight:400;color:#1c2b33">7...</div><div class="t" style="left:1384.70px;top:410.29px;font-size:8.9px;line-height:8.9px;font-weight:400;color:#8a9198">Вс...</div><div class="t" style="left:1249.00px;width:300px;text-align:right;top:396.40px;font-size:10.3px;line-height:10.3px;font-weight:400;color:#1c2b33">Максимальное количество</div><div class="t" style="left:1249.00px;width:300px;text-align:right;top:410.29px;font-size:8.9px;line-height:8.9px;font-weight:400;color:#8a9198">Клики по ссылке</div><div class="t" style="left:1561.70px;top:396.40px;font-size:10.3px;line-height:10.3px;font-weight:400;color:#1c2b33">17 авг 2025 г., 09:12</div><div class="t" style="left:1561.70px;top:410.29px;font-size:8.9px;line-height:8.9px;font-weight:400;color:#8a9198">232 д. назад</div><div class="b" style="left:8.7px;top:431.48px;width:26.6px;height:15.3px;border-radius:8px;background:#e1ecf7;border:1px solid #d3dbe3;box-sizing:border-box"></div><div class="b" style="left:20.70px;top:431.93px;width:14.4px;height:14.4px;border-radius:50%;background:#0a72c2"></div><div class="b" style="left:61.5px;top:422.48px;width:32.5px;height:32.66px;overflow:hidden"><svg style="display:block;width:100%;height:100%;filter:blur(0.45px)" viewBox="0 0 33 33" preserveAspectRatio="none"><rect width="33" height="33" fill="#4a4a44"/><path d="M0 2 L14 0 L12 10 L0 12 Z" fill="#6a5a50"/><path d="M4 14 Q16 2 31 10 L30 28 Q16 31 6 28 Z" fill="#654538"/><path d="M12 12 Q18 9 28 14 M14 18 Q20 16 28 20" stroke="#a08070" stroke-width="1" fill="none"/><circle cx="21" cy="10" r="1.8" fill="none" stroke="#cbbcb2" stroke-width="0.8"/><rect x="4" y="30" width="26" height="1.3" fill="#d23a3e"/></svg></div><div class="t" style="left:99.80px;top:428.96px;font-size:10.3px;line-height:10.3px;font-weight:400;color:#1c2b33">Ф_5</div><div class="b" style="left:386px;top:428.93px;width:8.3px;height:8.3px;border-radius:50%;background:#c9d0d7"></div><div class="t" style="left:400.00px;top:428.96px;font-size:10.3px;line-height:10.3px;font-weight:400;color:#1c2b33">Завершена</div><div class="t" style="left:281.70px;width:300px;text-align:right;top:428.96px;font-size:10.3px;line-height:10.3px;font-weight:400;color:#1c2b33">109</div><div class="t" style="left:281.70px;width:300px;text-align:right;top:442.85px;font-size:8.9px;line-height:8.9px;font-weight:400;color:#8a9198">Клики по ссылке</div><div class="t" style="left:378.90px;width:300px;text-align:right;top:428.96px;font-size:10.3px;line-height:10.3px;font-weight:400;color:#1c2b33">2,34 $</div><div class="t" style="left:527.70px;width:300px;text-align:right;top:428.96px;font-size:10.3px;line-height:10.3px;font-weight:400;color:#1c2b33">0,02 $</div><div class="t" style="left:527.70px;width:300px;text-align:right;top:442.85px;font-size:8.9px;line-height:8.9px;font-weight:400;color:#8a9198">За клик по ссылке</div><div class="t" style="left:622.20px;width:300px;text-align:right;top:428.96px;font-size:10.3px;line-height:10.3px;font-weight:400;color:#1c2b33">2 374</div><div class="t" style="left:717.20px;width:300px;text-align:right;top:428.96px;font-size:10.3px;line-height:10.3px;font-weight:400;color:#1c2b33">2 006</div><div class="t" style="left:811.80px;width:300px;text-align:right;top:428.96px;font-size:10.3px;line-height:10.3px;font-weight:400;color:#1c2b33">—</div><div class="t" style="left:906.80px;width:300px;text-align:right;top:428.96px;font-size:10.3px;line-height:10.3px;font-weight:400;color:#1c2b33">—</div><div class="t" style="left:1001.50px;width:300px;text-align:right;top:428.96px;font-size:10.3px;line-height:10.3px;font-weight:400;color:#1c2b33">—</div><div class="t" style="left:1313.80px;top:428.96px;font-size:10.3px;line-height:10.3px;font-weight:400;color:#1c2b33">7 сен 202...</div><div class="t" style="left:1384.70px;top:428.96px;font-size:10.3px;line-height:10.3px;font-weight:400;color:#1c2b33">7...</div><div class="t" style="left:1384.70px;top:442.85px;font-size:8.9px;line-height:8.9px;font-weight:400;color:#8a9198">Вс...</div><div class="t" style="left:1249.00px;width:300px;text-align:right;top:428.96px;font-size:10.3px;line-height:10.3px;font-weight:400;color:#1c2b33">Максимальное количество</div><div class="t" style="left:1249.00px;width:300px;text-align:right;top:442.85px;font-size:8.9px;line-height:8.9px;font-weight:400;color:#8a9198">Клики по ссылке</div><div class="t" style="left:1561.70px;top:428.96px;font-size:10.3px;line-height:10.3px;font-weight:400;color:#1c2b33">17 авг 2025 г., 09:12</div><div class="t" style="left:1561.70px;top:442.85px;font-size:8.9px;line-height:8.9px;font-weight:400;color:#8a9198">232 д. назад</div><div class="b" style="left:8.7px;top:464.04px;width:26.6px;height:15.3px;border-radius:8px;background:#e1ecf7;border:1px solid #d3dbe3;box-sizing:border-box"></div><div class="b" style="left:20.70px;top:464.49px;width:14.4px;height:14.4px;border-radius:50%;background:#0a72c2"></div><div class="b" style="left:61.5px;top:455.04px;width:32.5px;height:32.66px;overflow:hidden"><svg style="display:block;width:100%;height:100%;filter:blur(0.45px)" viewBox="0 0 33 33" preserveAspectRatio="none"><rect width="33" height="33" fill="#262424"/><path d="M3 14 Q14 4 28 9 L30 18 Q24 28 12 29 Q2 26 3 14 Z" fill="#dba582"/><path d="M12 14 Q18 12 26 12 M10 20 Q18 19 27 17" stroke="#b98262" stroke-width="1" fill="none"/><path d="M15 20 Q18 24 22 20" stroke="#ece6e0" stroke-width="1.4" fill="none"/><rect x="4" y="30" width="26" height="1.3" fill="#d23a3e"/></svg></div><div class="t" style="left:99.80px;top:461.52px;font-size:10.3px;line-height:10.3px;font-weight:400;color:#1c2b33">Ф_9</div><div class="b" style="left:386px;top:461.49px;width:8.3px;height:8.3px;border-radius:50%;background:#c9d0d7"></div><div class="t" style="left:400.00px;top:461.52px;font-size:10.3px;line-height:10.3px;font-weight:400;color:#1c2b33">Завершена</div><div class="t" style="left:281.70px;width:300px;text-align:right;top:461.52px;font-size:10.3px;line-height:10.3px;font-weight:400;color:#1c2b33">107</div><div class="t" style="left:281.70px;width:300px;text-align:right;top:475.41px;font-size:8.9px;line-height:8.9px;font-weight:400;color:#8a9198">Клики по ссылке</div><div class="t" style="left:378.90px;width:300px;text-align:right;top:461.52px;font-size:10.3px;line-height:10.3px;font-weight:400;color:#1c2b33">2,62 $</div><div class="t" style="left:527.70px;width:300px;text-align:right;top:461.52px;font-size:10.3px;line-height:10.3px;font-weight:400;color:#1c2b33">0,02 $</div><div class="t" style="left:527.70px;width:300px;text-align:right;top:475.41px;font-size:8.9px;line-height:8.9px;font-weight:400;color:#8a9198">За клик по ссылке</div><div class="t" style="left:622.20px;width:300px;text-align:right;top:461.52px;font-size:10.3px;line-height:10.3px;font-weight:400;color:#1c2b33">2 958</div><div class="t" style="left:717.20px;width:300px;text-align:right;top:461.52px;font-size:10.3px;line-height:10.3px;font-weight:400;color:#1c2b33">2 733</div><div class="t" style="left:811.80px;width:300px;text-align:right;top:461.52px;font-size:10.3px;line-height:10.3px;font-weight:400;color:#1c2b33">—</div><div class="t" style="left:906.80px;width:300px;text-align:right;top:461.52px;font-size:10.3px;line-height:10.3px;font-weight:400;color:#1c2b33">—</div><div class="t" style="left:1001.50px;width:300px;text-align:right;top:461.52px;font-size:10.3px;line-height:10.3px;font-weight:400;color:#1c2b33">—</div><div class="t" style="left:1313.80px;top:461.52px;font-size:10.3px;line-height:10.3px;font-weight:400;color:#1c2b33">7 сен 202...</div><div class="t" style="left:1384.70px;top:461.52px;font-size:10.3px;line-height:10.3px;font-weight:400;color:#1c2b33">7...</div><div class="t" style="left:1384.70px;top:475.41px;font-size:8.9px;line-height:8.9px;font-weight:400;color:#8a9198">Вс...</div><div class="t" style="left:1249.00px;width:300px;text-align:right;top:461.52px;font-size:10.3px;line-height:10.3px;font-weight:400;color:#1c2b33">Максимальное количество</div><div class="t" style="left:1249.00px;width:300px;text-align:right;top:475.41px;font-size:8.9px;line-height:8.9px;font-weight:400;color:#8a9198">Клики по ссылке</div><div class="t" style="left:1561.70px;top:461.52px;font-size:10.3px;line-height:10.3px;font-weight:400;color:#1c2b33">17 авг 2025 г., 09:12</div><div class="t" style="left:1561.70px;top:475.41px;font-size:8.9px;line-height:8.9px;font-weight:400;color:#8a9198">232 д. назад</div><div class="b" style="left:8.7px;top:496.60px;width:26.6px;height:15.3px;border-radius:8px;background:#e1ecf7;border:1px solid #d3dbe3;box-sizing:border-box"></div><div class="b" style="left:20.70px;top:497.05px;width:14.4px;height:14.4px;border-radius:50%;background:#0a72c2"></div><div class="b" style="left:61.5px;top:487.60px;width:32.5px;height:32.66px;overflow:hidden"><svg style="display:block;width:100%;height:100%;filter:blur(0.45px)" viewBox="0 0 33 33" preserveAspectRatio="none"><rect width="33" height="33" fill="#242222"/><rect x="5" y="2" width="22" height="1" fill="#d8d4d2"/><path d="M22 4 L33 8 V30 L24 26 Z" fill="#3c3c3e"/><path d="M0 18 Q10 12 22 20 L26 26 L22 30 L0 30 Z" fill="#d7cbc4"/><path d="M4 22 Q12 20 18 25" stroke="#b7aaa2" stroke-width="1" fill="none"/><rect x="4" y="30" width="26" height="1.3" fill="#d23a3e"/></svg></div><div class="t" style="left:99.80px;top:494.08px;font-size:10.3px;line-height:10.3px;font-weight:400;color:#1c2b33">Ф_7</div><div class="b" style="left:386px;top:494.05px;width:8.3px;height:8.3px;border-radius:50%;background:#c9d0d7"></div><div class="t" style="left:400.00px;top:494.08px;font-size:10.3px;line-height:10.3px;font-weight:400;color:#1c2b33">Завершена</div><div class="t" style="left:281.70px;width:300px;text-align:right;top:494.08px;font-size:10.3px;line-height:10.3px;font-weight:400;color:#1c2b33">83</div><div class="t" style="left:281.70px;width:300px;text-align:right;top:507.97px;font-size:8.9px;line-height:8.9px;font-weight:400;color:#8a9198">Клики по ссылке</div><div class="t" style="left:378.90px;width:300px;text-align:right;top:494.08px;font-size:10.3px;line-height:10.3px;font-weight:400;color:#1c2b33">2,40 $</div><div class="t" style="left:527.70px;width:300px;text-align:right;top:494.08px;font-size:10.3px;line-height:10.3px;font-weight:400;color:#1c2b33">0,03 $</div><div class="t" style="left:527.70px;width:300px;text-align:right;top:507.97px;font-size:8.9px;line-height:8.9px;font-weight:400;color:#8a9198">За клик по ссылке</div><div class="t" style="left:622.20px;width:300px;text-align:right;top:494.08px;font-size:10.3px;line-height:10.3px;font-weight:400;color:#1c2b33">1 983</div><div class="t" style="left:717.20px;width:300px;text-align:right;top:494.08px;font-size:10.3px;line-height:10.3px;font-weight:400;color:#1c2b33">1 796</div><div class="t" style="left:811.80px;width:300px;text-align:right;top:494.08px;font-size:10.3px;line-height:10.3px;font-weight:400;color:#1c2b33">—</div><div class="t" style="left:906.80px;width:300px;text-align:right;top:494.08px;font-size:10.3px;line-height:10.3px;font-weight:400;color:#1c2b33">—</div><div class="t" style="left:1001.50px;width:300px;text-align:right;top:494.08px;font-size:10.3px;line-height:10.3px;font-weight:400;color:#1c2b33">—</div><div class="t" style="left:1313.80px;top:494.08px;font-size:10.3px;line-height:10.3px;font-weight:400;color:#1c2b33">7 сен 202...</div><div class="t" style="left:1384.70px;top:494.08px;font-size:10.3px;line-height:10.3px;font-weight:400;color:#1c2b33">7...</div><div class="t" style="left:1384.70px;top:507.97px;font-size:8.9px;line-height:8.9px;font-weight:400;color:#8a9198">Вс...</div><div class="t" style="left:1249.00px;width:300px;text-align:right;top:494.08px;font-size:10.3px;line-height:10.3px;font-weight:400;color:#1c2b33">Максимальное количество</div><div class="t" style="left:1249.00px;width:300px;text-align:right;top:507.97px;font-size:8.9px;line-height:8.9px;font-weight:400;color:#8a9198">Клики по ссылке</div><div class="t" style="left:1561.70px;top:494.08px;font-size:10.3px;line-height:10.3px;font-weight:400;color:#1c2b33">17 авг 2025 г., 09:12</div><div class="t" style="left:1561.70px;top:507.97px;font-size:8.9px;line-height:8.9px;font-weight:400;color:#8a9198">232 д. назад</div></div><div class="b" style="left:0.00px;top:762.80px;width:1630.00px;height:2.60px;background:#e0e2e5"></div><div class="t" style="left:64.40px;top:773.15px;font-size:10.1px;line-height:10.1px;font-weight:400;color:#1c2b33;">Результаты, число объявлений: 54</div><svg class="b" style="left:231.00px;top:772.50px" width="9" height="9" viewBox="0 0 9 9"><circle cx="4.5" cy="4.5" r="4.5" fill="#1c2b33"/><rect x="3.8" y="3.8" width="1.4" height="3.4" fill="#fff"/><circle cx="4.5" cy="2.4" r="0.8" fill="#fff"/></svg><div class="b" style="left:12.60px;top:820.70px;width:984.40px;height:4.70px;background:#c2c2c2;border-radius:3px"></div>
</body></html>
